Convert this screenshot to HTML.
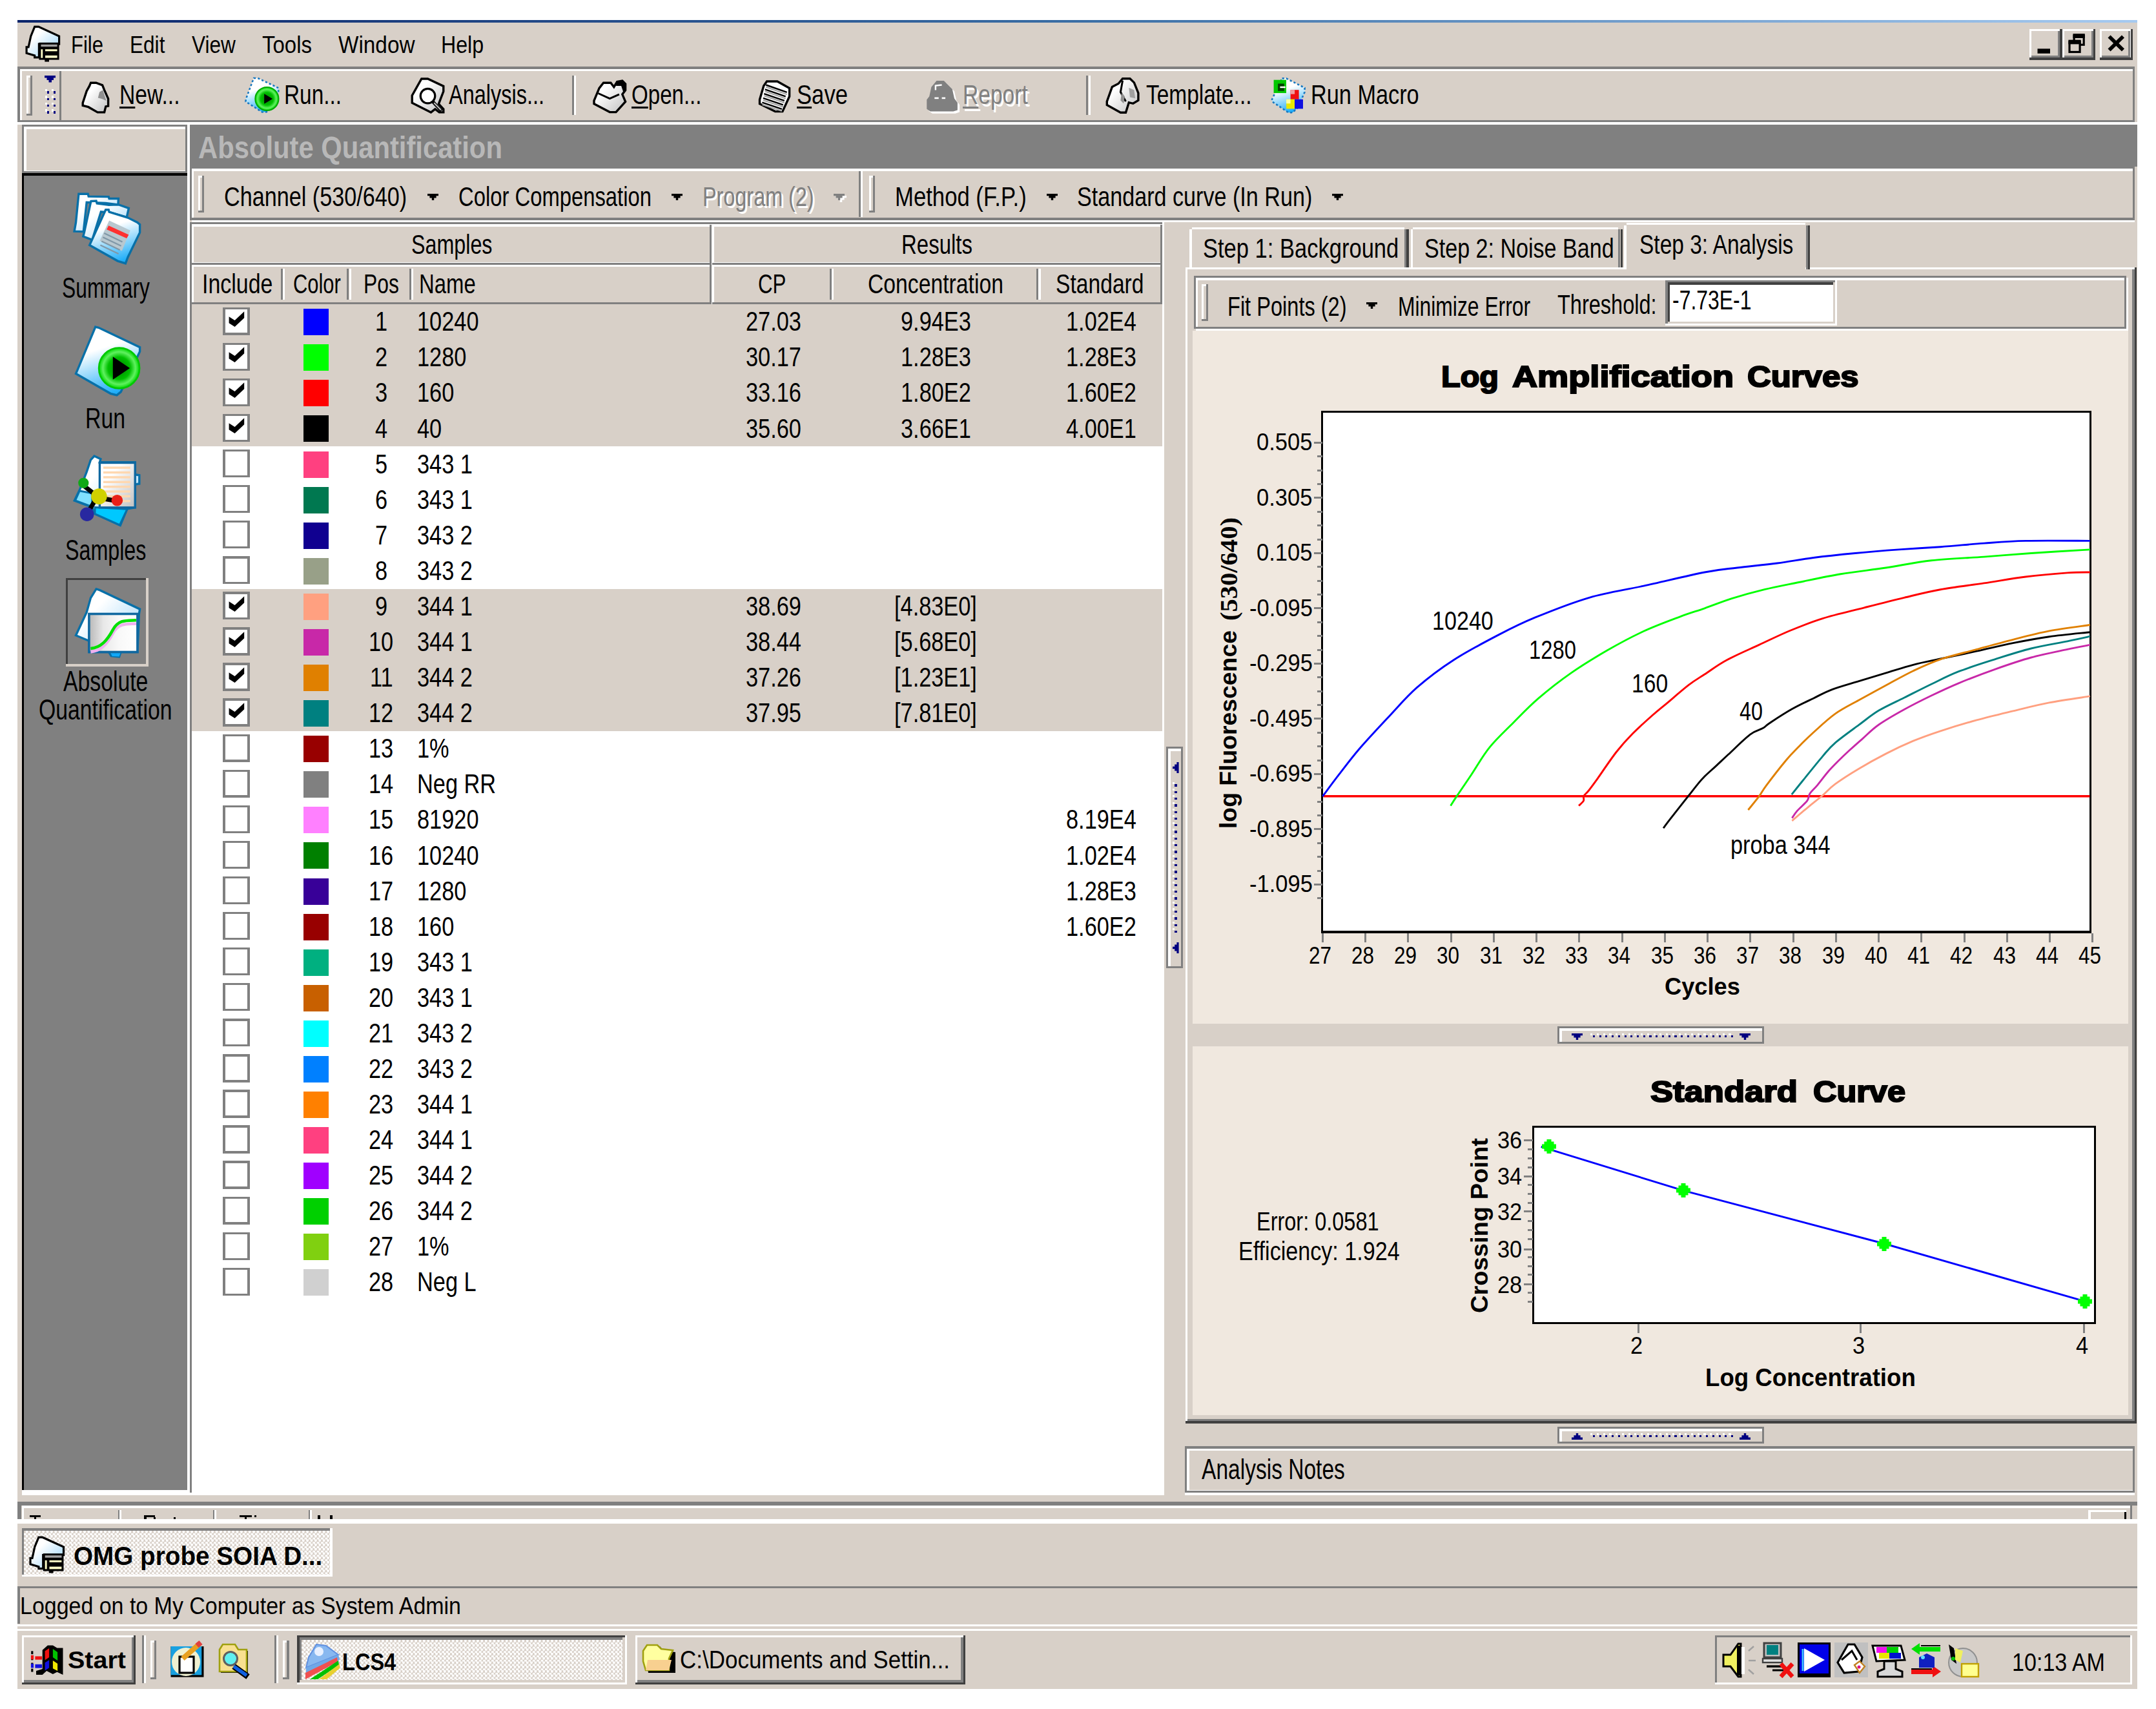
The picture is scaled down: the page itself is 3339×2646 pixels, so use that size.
<!DOCTYPE html>
<html><head><meta charset="utf-8"><title>LightCycler</title>
<style>
html,body{margin:0;padding:0;background:#fff;}
body{width:3339px;height:2646px;position:relative;overflow:hidden;font-family:"Liberation Sans",sans-serif;}
div,span.t,svg{position:absolute;}
span.t{white-space:pre;line-height:1;transform-origin:0 0;}
u{text-decoration:underline;text-decoration-thickness:3.2px;text-underline-offset:4px;text-decoration-skip-ink:none}
</style></head><body>
<div style="left:27.0px;top:31.0px;width:3282.7px;height:2583.6px;background:#D8D0C8;"></div>
<div style="left:27.0px;top:31.0px;width:3282.7px;height:3.6px;background:linear-gradient(90deg,#0A246A,#3a6ea5 50%,#A6CAF0);"></div>
<span class="t" style="left:109.8px;top:50.5px;font-size:37.68px;color:#000;transform:scaleX(0.8229);">File</span>
<span class="t" style="left:200.6px;top:50.5px;font-size:37.68px;color:#000;transform:scaleX(0.8381);">Edit</span>
<span class="t" style="left:296.6px;top:50.5px;font-size:37.68px;color:#000;transform:scaleX(0.8384);">View</span>
<span class="t" style="left:406.4px;top:50.5px;font-size:37.68px;color:#000;transform:scaleX(0.8751);">Tools</span>
<span class="t" style="left:524.4px;top:50.5px;font-size:37.68px;color:#000;transform:scaleX(0.8841);">Window</span>
<span class="t" style="left:683.4px;top:50.5px;font-size:37.68px;color:#000;transform:scaleX(0.8539);">Help</span>
<div style="left:3142.7px;top:44.8px;width:50.9px;height:47.9px;background:#404040;"></div>
<div style="left:3142.7px;top:44.8px;width:47.7px;height:44.7px;background:#FFFFFF;"></div>
<div style="left:3145.9px;top:48.0px;width:44.4px;height:41.4px;background:#808080;"></div>
<div style="left:3145.9px;top:48.0px;width:41.2px;height:38.2px;background:#D8D0C8;"></div>
<div style="left:3193.6px;top:44.8px;width:51.5px;height:47.9px;background:#404040;"></div>
<div style="left:3193.6px;top:44.8px;width:48.3px;height:44.7px;background:#FFFFFF;"></div>
<div style="left:3196.8px;top:48.0px;width:45.0px;height:41.4px;background:#808080;"></div>
<div style="left:3196.8px;top:48.0px;width:41.8px;height:38.2px;background:#D8D0C8;"></div>
<div style="left:3251.7px;top:44.8px;width:51.1px;height:47.9px;background:#404040;"></div>
<div style="left:3251.7px;top:44.8px;width:47.9px;height:44.7px;background:#FFFFFF;"></div>
<div style="left:3254.9px;top:48.0px;width:44.6px;height:41.4px;background:#808080;"></div>
<div style="left:3254.9px;top:48.0px;width:41.4px;height:38.2px;background:#D8D0C8;"></div>
<div style="left:27.0px;top:103.2px;width:3278.8px;height:85.7px;background:#808080;"></div>
<div style="left:30.6px;top:106.6px;width:3272.6px;height:79.4px;background:#FFFFFF;"></div>
<div style="left:34.0px;top:110.0px;width:3269.2px;height:76.0px;background:#D8D0C8;"></div>
<div style="left:27.0px;top:188.9px;width:3282.7px;height:4.1px;background:#FFFFFF;"></div>
<div style="left:91.9px;top:110.0px;width:3.1px;height:78.9px;background:#808080;"></div>
<div style="left:70.0px;top:185.9px;width:25.0px;height:3.0px;background:#808080;"></div>
<div style="left:40.5px;top:117.0px;width:9.5px;height:61.7px;background:#808080;"></div>
<div style="left:40.5px;top:117.0px;width:6.5px;height:58.5px;background:#FFFFFF;"></div>
<div style="left:43.5px;top:120.0px;width:3.5px;height:55.5px;background:#D8D0C8;"></div>
<svg style="left:69px;top:117px" width="18" height="11"><path d="M0 0H17V3.5H14V7H11V10.5H6.5V7H3.5V3.5H0Z" fill="#000080"/></svg>
<div style="left:69.5px;top:138.0px;width:3.4px;height:3.4px;background:#FFFFFF;"></div>
<div style="left:72.7px;top:141.2px;width:3.4px;height:3.4px;background:#000080;"></div>
<div style="left:79.5px;top:138.0px;width:3.4px;height:3.4px;background:#FFFFFF;"></div>
<div style="left:82.7px;top:141.2px;width:3.4px;height:3.4px;background:#000080;"></div>
<div style="left:69.5px;top:148.4px;width:3.4px;height:3.4px;background:#FFFFFF;"></div>
<div style="left:72.7px;top:151.6px;width:3.4px;height:3.4px;background:#000080;"></div>
<div style="left:79.5px;top:148.4px;width:3.4px;height:3.4px;background:#FFFFFF;"></div>
<div style="left:82.7px;top:151.6px;width:3.4px;height:3.4px;background:#000080;"></div>
<div style="left:69.5px;top:158.8px;width:3.4px;height:3.4px;background:#FFFFFF;"></div>
<div style="left:72.7px;top:162.0px;width:3.4px;height:3.4px;background:#000080;"></div>
<div style="left:79.5px;top:158.8px;width:3.4px;height:3.4px;background:#FFFFFF;"></div>
<div style="left:82.7px;top:162.0px;width:3.4px;height:3.4px;background:#000080;"></div>
<div style="left:69.5px;top:169.2px;width:3.4px;height:3.4px;background:#FFFFFF;"></div>
<div style="left:72.7px;top:172.4px;width:3.4px;height:3.4px;background:#000080;"></div>
<div style="left:79.5px;top:169.2px;width:3.4px;height:3.4px;background:#FFFFFF;"></div>
<div style="left:82.7px;top:172.4px;width:3.4px;height:3.4px;background:#000080;"></div>
<span class="t" style="left:184.8px;top:125.3px;font-size:43.19px;color:#000;transform:scaleX(0.7796);"><u>N</u>ew...</span>
<span class="t" style="left:440.0px;top:125.3px;font-size:43.19px;color:#000;transform:scaleX(0.7725);">Run...</span>
<span class="t" style="left:694.8px;top:125.3px;font-size:43.19px;color:#000;transform:scaleX(0.7519);">Analysis...</span>
<span class="t" style="left:977.5px;top:125.3px;font-size:43.19px;color:#000;transform:scaleX(0.7659);"><u>O</u>pen...</span>
<span class="t" style="left:1234.0px;top:125.3px;font-size:43.19px;color:#000;transform:scaleX(0.8023);"><u>S</u>ave</span>
<span class="t" style="left:1494.2px;top:128.5px;font-size:43.19px;color:#fff;transform:scaleX(0.7773);"><u>R</u>eport</span>
<span class="t" style="left:1491.0px;top:125.3px;font-size:43.19px;color:#808080;transform:scaleX(0.7773);"><u>R</u>eport</span>
<span class="t" style="left:1775.0px;top:125.3px;font-size:43.19px;color:#000;transform:scaleX(0.7738);">Template...</span>
<span class="t" style="left:2030.0px;top:125.3px;font-size:43.19px;color:#000;transform:scaleX(0.7936);">Run Macro</span>
<div style="left:886.0px;top:117.0px;width:3.2px;height:61.0px;background:#808080;"></div>
<div style="left:889.2px;top:117.0px;width:3.2px;height:61.0px;background:#FFFFFF;"></div>
<div style="left:1682.3px;top:117.0px;width:3.2px;height:61.0px;background:#808080;"></div>
<div style="left:1685.5px;top:117.0px;width:3.2px;height:61.0px;background:#FFFFFF;"></div>
<div style="left:34.2px;top:193.0px;width:256.2px;height:75.3px;background:#808080;"></div>
<div style="left:37.2px;top:196.0px;width:250.2px;height:68.5px;background:#FFFFFF;"></div>
<div style="left:41.0px;top:199.8px;width:246.4px;height:64.7px;background:#D8D0C8;"></div>
<div style="left:34.2px;top:268.3px;width:256.2px;height:3.7px;background:#000;"></div>
<div style="left:34.2px;top:272.0px;width:256.2px;height:2035.3px;background:#000;"></div>
<div style="left:37.4px;top:272.0px;width:253.0px;height:2035.3px;background:#808080;"></div>
<div style="left:290.4px;top:193.0px;width:3.8px;height:2118.0px;background:#FFFFFF;"></div>
<div style="left:34.2px;top:2307.3px;width:260.0px;height:7.3px;background:#FFFFFF;"></div>
<span class="t" style="left:95.5px;top:424.5px;font-size:43.48px;color:#000;transform:scaleX(0.7313);">Summary</span>
<span class="t" style="left:132.4px;top:626.7px;font-size:43.48px;color:#000;transform:scaleX(0.7796);">Run</span>
<span class="t" style="left:100.8px;top:830.7px;font-size:43.48px;color:#000;transform:scaleX(0.7414);">Samples</span>
<span class="t" style="left:97.8px;top:1034.2px;font-size:43.48px;color:#000;transform:scaleX(0.7764);">Absolute</span>
<span class="t" style="left:60.2px;top:1078.4px;font-size:43.48px;color:#000;transform:scaleX(0.7767);">Quantification</span>
<div style="left:101.5px;top:894.5px;width:128.0px;height:137.0px;background:#D8D0C8;"></div>
<div style="left:101.5px;top:894.5px;width:124.8px;height:133.8px;background:#404040;"></div>
<div style="left:104.7px;top:897.7px;width:121.5px;height:130.5px;background:#808080;"></div>
<div style="left:294.2px;top:193.0px;width:3015.5px;height:64.8px;background:#808080;"></div>
<div style="left:294.2px;top:257.8px;width:3011.6px;height:3.5px;background:#808080;"></div>
<span class="t" style="left:306.5px;top:203.5px;font-size:48.84px;color:#B8B8B8;transform:scaleX(0.8551);font-weight:bold;">Absolute Quantification</span>
<div style="left:296.9px;top:261.3px;width:3012.1px;height:82.7px;background:#FFFFFF;"></div>
<div style="left:293.7px;top:257.9px;width:3012.1px;height:82.7px;background:#808080;"></div>
<div style="left:296.9px;top:261.3px;width:3005.7px;height:75.9px;background:#FFFFFF;"></div>
<div style="left:300.1px;top:264.7px;width:3002.5px;height:72.5px;background:#D8D0C8;"></div>
<div style="left:3306.0px;top:257.9px;width:3.0px;height:86.1px;background:#D8D0C8;"></div>
<div style="left:306.5px;top:272.0px;width:9.5px;height:57.4px;background:#808080;"></div>
<div style="left:306.5px;top:272.0px;width:6.5px;height:54.4px;background:#FFFFFF;"></div>
<div style="left:309.5px;top:275.0px;width:3.5px;height:51.4px;background:#D8D0C8;"></div>
<span class="t" style="left:347.4px;top:284.2px;font-size:42.46px;color:#000;transform:scaleX(0.8050);">Channel (530/640)</span>
<svg style="left:662.0px;top:300.2px" width="18" height="11"><path d="M0 0H17V3.3H13.6V6.6H10.2V9.9H6.8V6.6H3.4V3.3H0Z" fill="#000"/></svg>
<span class="t" style="left:709.7px;top:284.2px;font-size:42.46px;color:#000;transform:scaleX(0.7725);">Color Compensation</span>
<svg style="left:1040.3px;top:300.2px" width="18" height="11"><path d="M0 0H17V3.3H13.6V6.6H10.2V9.9H6.8V6.6H3.4V3.3H0Z" fill="#000"/></svg>
<span class="t" style="left:1091.2px;top:287.4px;font-size:42.46px;color:#fff;transform:scaleX(0.7623);">Program (2)</span>
<span class="t" style="left:1088.0px;top:284.2px;font-size:42.46px;color:#808080;transform:scaleX(0.7623);">Program (2)</span>
<svg style="left:1294.2px;top:303.4px" width="18" height="11"><path d="M0 0H17V3.3H13.6V6.6H10.2V9.9H6.8V6.6H3.4V3.3H0Z" fill="#fff"/></svg>
<svg style="left:1291.0px;top:300.2px" width="18" height="11"><path d="M0 0H17V3.3H13.6V6.6H10.2V9.9H6.8V6.6H3.4V3.3H0Z" fill="#808080"/></svg>
<div style="left:1330.0px;top:265.4px;width:3.2px;height:70.8px;background:#808080;"></div>
<div style="left:1333.2px;top:265.4px;width:3.3px;height:70.8px;background:#FFFFFF;"></div>
<div style="left:1345.8px;top:272.0px;width:9.5px;height:57.4px;background:#808080;"></div>
<div style="left:1345.8px;top:272.0px;width:6.5px;height:54.4px;background:#FFFFFF;"></div>
<div style="left:1348.8px;top:275.0px;width:3.5px;height:51.4px;background:#D8D0C8;"></div>
<span class="t" style="left:1385.8px;top:284.2px;font-size:42.46px;color:#000;transform:scaleX(0.8173);">Method (F.P.)</span>
<svg style="left:1621.0px;top:300.2px" width="18" height="11"><path d="M0 0H17V3.3H13.6V6.6H10.2V9.9H6.8V6.6H3.4V3.3H0Z" fill="#000"/></svg>
<span class="t" style="left:1667.6px;top:284.2px;font-size:42.46px;color:#000;transform:scaleX(0.8041);">Standard curve (In Run)</span>
<svg style="left:2062.8px;top:300.2px" width="18" height="11"><path d="M0 0H17V3.3H13.6V6.6H10.2V9.9H6.8V6.6H3.4V3.3H0Z" fill="#000"/></svg>
<div style="left:294.0px;top:343.8px;width:1509.2px;height:1971.0px;background:#FFFFFF;"></div>
<div style="left:294.0px;top:343.8px;width:1506.0px;height:3.7px;background:#808080;"></div>
<div style="left:294.0px;top:343.8px;width:2.9px;height:1967.7px;background:#808080;"></div>
<div style="left:296.9px;top:347.5px;width:805.6px;height:62.2px;background:#808080;"></div>
<div style="left:296.9px;top:347.5px;width:802.4px;height:59.0px;background:#FFFFFF;"></div>
<div style="left:300.1px;top:350.7px;width:799.1px;height:55.7px;background:#D8D0C8;"></div>
<div style="left:1102.5px;top:347.5px;width:697.5px;height:62.2px;background:#808080;"></div>
<div style="left:1102.5px;top:347.5px;width:694.3px;height:59.0px;background:#FFFFFF;"></div>
<div style="left:1105.7px;top:350.7px;width:691.0px;height:55.7px;background:#D8D0C8;"></div>
<div style="left:296.9px;top:409.7px;width:805.6px;height:61.3px;background:#808080;"></div>
<div style="left:296.9px;top:409.7px;width:802.4px;height:58.1px;background:#FFFFFF;"></div>
<div style="left:300.1px;top:412.9px;width:799.1px;height:54.8px;background:#D8D0C8;"></div>
<div style="left:1102.5px;top:409.7px;width:697.5px;height:61.3px;background:#808080;"></div>
<div style="left:1102.5px;top:409.7px;width:694.3px;height:58.1px;background:#FFFFFF;"></div>
<div style="left:1105.7px;top:412.9px;width:691.0px;height:54.8px;background:#D8D0C8;"></div>
<span class="t" style="left:636.9px;top:356.6px;font-size:43.04px;color:#000;transform:scaleX(0.7495);">Samples</span>
<span class="t" style="left:1395.5px;top:356.6px;font-size:43.04px;color:#000;transform:scaleX(0.7663);">Results</span>
<span class="t" style="left:312.6px;top:417.9px;font-size:43.04px;color:#000;transform:scaleX(0.7881);">Include</span>
<span class="t" style="left:453.5px;top:417.9px;font-size:43.04px;color:#000;transform:scaleX(0.7164);">Color</span>
<span class="t" style="left:562.7px;top:417.9px;font-size:43.04px;color:#000;transform:scaleX(0.7391);">Pos</span>
<span class="t" style="left:648.5px;top:417.9px;font-size:43.04px;color:#000;transform:scaleX(0.7638);">Name</span>
<span class="t" style="left:1173.9px;top:417.9px;font-size:43.04px;color:#000;transform:scaleX(0.7254);">CP</span>
<span class="t" style="left:1343.7px;top:417.9px;font-size:43.04px;color:#000;transform:scaleX(0.7834);">Concentration</span>
<span class="t" style="left:1635.1px;top:417.9px;font-size:43.04px;color:#000;transform:scaleX(0.7816);">Standard</span>
<div style="left:435.0px;top:416.4px;width:3.2px;height:47.9px;background:#808080;"></div>
<div style="left:438.2px;top:416.4px;width:3.2px;height:47.9px;background:#FFFFFF;"></div>
<div style="left:537.3px;top:416.4px;width:3.2px;height:47.9px;background:#808080;"></div>
<div style="left:540.5px;top:416.4px;width:3.2px;height:47.9px;background:#FFFFFF;"></div>
<div style="left:634.0px;top:416.4px;width:3.2px;height:47.9px;background:#808080;"></div>
<div style="left:637.2px;top:416.4px;width:3.2px;height:47.9px;background:#FFFFFF;"></div>
<div style="left:1284.7px;top:416.4px;width:3.2px;height:47.9px;background:#808080;"></div>
<div style="left:1287.9px;top:416.4px;width:3.2px;height:47.9px;background:#FFFFFF;"></div>
<div style="left:1605.2px;top:416.4px;width:3.2px;height:47.9px;background:#808080;"></div>
<div style="left:1608.4px;top:416.4px;width:3.2px;height:47.9px;background:#FFFFFF;"></div>
<div style="left:296.9px;top:471.0px;width:1503.1px;height:55.1px;background:#D8D0C8;"></div>
<div style="left:345.2px;top:475.5px;width:41.6px;height:43.4px;background:#808080;"></div>
<div style="left:348.6px;top:478.9px;width:34.8px;height:36.6px;background:#FFFFFF;"></div>
<svg style="left:348.6px;top:478.9px" width="35" height="37" viewBox="0 0 35 37"><path d="M5.6 11.2 L14.6 16.9 L29.2 3.3 L29.2 13.3 L14.6 26.9 L5.6 21.2Z" fill="#000"/></svg>
<div style="left:469.9px;top:478.2px;width:38.9px;height:41.1px;background:#0000FF;"></div>
<span class="t" style="left:580.8px;top:476.3px;font-size:43.19px;color:#000;transform:scaleX(0.7950);">1</span>
<span class="t" style="left:646.3px;top:476.3px;font-size:43.19px;color:#000;transform:scaleX(0.7950);">10240</span>
<span class="t" style="left:1154.5px;top:476.3px;font-size:43.19px;color:#000;transform:scaleX(0.7950);">27.03</span>
<span class="t" style="left:1394.6px;top:476.3px;font-size:43.19px;color:#000;transform:scaleX(0.7950);">9.94E3</span>
<span class="t" style="left:1650.6px;top:476.3px;font-size:43.19px;color:#000;transform:scaleX(0.7950);">1.02E4</span>
<div style="left:296.9px;top:526.1px;width:1503.1px;height:55.1px;background:#D8D0C8;"></div>
<div style="left:345.2px;top:530.6px;width:41.6px;height:43.4px;background:#808080;"></div>
<div style="left:348.6px;top:534.0px;width:34.8px;height:36.6px;background:#FFFFFF;"></div>
<svg style="left:348.6px;top:534.0px" width="35" height="37" viewBox="0 0 35 37"><path d="M5.6 11.2 L14.6 16.9 L29.2 3.3 L29.2 13.3 L14.6 26.9 L5.6 21.2Z" fill="#000"/></svg>
<div style="left:469.9px;top:533.3px;width:38.9px;height:41.1px;background:#00FF00;"></div>
<span class="t" style="left:580.8px;top:531.4px;font-size:43.19px;color:#000;transform:scaleX(0.7950);">2</span>
<span class="t" style="left:646.3px;top:531.4px;font-size:43.19px;color:#000;transform:scaleX(0.7950);">1280</span>
<span class="t" style="left:1154.5px;top:531.4px;font-size:43.19px;color:#000;transform:scaleX(0.7950);">30.17</span>
<span class="t" style="left:1394.6px;top:531.4px;font-size:43.19px;color:#000;transform:scaleX(0.7950);">1.28E3</span>
<span class="t" style="left:1650.6px;top:531.4px;font-size:43.19px;color:#000;transform:scaleX(0.7950);">1.28E3</span>
<div style="left:296.9px;top:581.2px;width:1503.1px;height:55.1px;background:#D8D0C8;"></div>
<div style="left:345.2px;top:585.7px;width:41.6px;height:43.4px;background:#808080;"></div>
<div style="left:348.6px;top:589.1px;width:34.8px;height:36.6px;background:#FFFFFF;"></div>
<svg style="left:348.6px;top:589.1px" width="35" height="37" viewBox="0 0 35 37"><path d="M5.6 11.2 L14.6 16.9 L29.2 3.3 L29.2 13.3 L14.6 26.9 L5.6 21.2Z" fill="#000"/></svg>
<div style="left:469.9px;top:588.4px;width:38.9px;height:41.1px;background:#FF0000;"></div>
<span class="t" style="left:580.8px;top:586.4px;font-size:43.19px;color:#000;transform:scaleX(0.7950);">3</span>
<span class="t" style="left:646.3px;top:586.4px;font-size:43.19px;color:#000;transform:scaleX(0.7950);">160</span>
<span class="t" style="left:1154.5px;top:586.4px;font-size:43.19px;color:#000;transform:scaleX(0.7950);">33.16</span>
<span class="t" style="left:1394.6px;top:586.4px;font-size:43.19px;color:#000;transform:scaleX(0.7950);">1.80E2</span>
<span class="t" style="left:1650.6px;top:586.4px;font-size:43.19px;color:#000;transform:scaleX(0.7950);">1.60E2</span>
<div style="left:296.9px;top:636.2px;width:1503.1px;height:55.1px;background:#D8D0C8;"></div>
<div style="left:345.2px;top:640.7px;width:41.6px;height:43.4px;background:#808080;"></div>
<div style="left:348.6px;top:644.1px;width:34.8px;height:36.6px;background:#FFFFFF;"></div>
<svg style="left:348.6px;top:644.1px" width="35" height="37" viewBox="0 0 35 37"><path d="M5.6 11.2 L14.6 16.9 L29.2 3.3 L29.2 13.3 L14.6 26.9 L5.6 21.2Z" fill="#000"/></svg>
<div style="left:469.9px;top:643.4px;width:38.9px;height:41.1px;background:#000000;"></div>
<span class="t" style="left:580.8px;top:641.5px;font-size:43.19px;color:#000;transform:scaleX(0.7950);">4</span>
<span class="t" style="left:646.3px;top:641.5px;font-size:43.19px;color:#000;transform:scaleX(0.7950);">40</span>
<span class="t" style="left:1154.5px;top:641.5px;font-size:43.19px;color:#000;transform:scaleX(0.7950);">35.60</span>
<span class="t" style="left:1394.6px;top:641.5px;font-size:43.19px;color:#000;transform:scaleX(0.7950);">3.66E1</span>
<span class="t" style="left:1650.6px;top:641.5px;font-size:43.19px;color:#000;transform:scaleX(0.7950);">4.00E1</span>
<div style="left:345.2px;top:695.8px;width:41.6px;height:43.4px;background:#808080;"></div>
<div style="left:348.6px;top:699.2px;width:34.8px;height:36.6px;background:#FFFFFF;"></div>
<div style="left:469.9px;top:698.5px;width:38.9px;height:41.1px;background:#FF4080;"></div>
<span class="t" style="left:580.8px;top:696.6px;font-size:43.19px;color:#000;transform:scaleX(0.7950);">5</span>
<span class="t" style="left:646.3px;top:696.6px;font-size:43.19px;color:#000;transform:scaleX(0.7950);">343 1</span>
<div style="left:345.2px;top:750.9px;width:41.6px;height:43.4px;background:#808080;"></div>
<div style="left:348.6px;top:754.3px;width:34.8px;height:36.6px;background:#FFFFFF;"></div>
<div style="left:469.9px;top:753.6px;width:38.9px;height:41.1px;background:#007850;"></div>
<span class="t" style="left:580.8px;top:751.7px;font-size:43.19px;color:#000;transform:scaleX(0.7950);">6</span>
<span class="t" style="left:646.3px;top:751.7px;font-size:43.19px;color:#000;transform:scaleX(0.7950);">343 1</span>
<div style="left:345.2px;top:806.0px;width:41.6px;height:43.4px;background:#808080;"></div>
<div style="left:348.6px;top:809.4px;width:34.8px;height:36.6px;background:#FFFFFF;"></div>
<div style="left:469.9px;top:808.7px;width:38.9px;height:41.1px;background:#100090;"></div>
<span class="t" style="left:580.8px;top:806.8px;font-size:43.19px;color:#000;transform:scaleX(0.7950);">7</span>
<span class="t" style="left:646.3px;top:806.8px;font-size:43.19px;color:#000;transform:scaleX(0.7950);">343 2</span>
<div style="left:345.2px;top:861.1px;width:41.6px;height:43.4px;background:#808080;"></div>
<div style="left:348.6px;top:864.5px;width:34.8px;height:36.6px;background:#FFFFFF;"></div>
<div style="left:469.9px;top:863.8px;width:38.9px;height:41.1px;background:#98A088;"></div>
<span class="t" style="left:580.8px;top:861.8px;font-size:43.19px;color:#000;transform:scaleX(0.7950);">8</span>
<span class="t" style="left:646.3px;top:861.8px;font-size:43.19px;color:#000;transform:scaleX(0.7950);">343 2</span>
<div style="left:296.9px;top:911.6px;width:1503.1px;height:55.1px;background:#D8D0C8;"></div>
<div style="left:345.2px;top:916.1px;width:41.6px;height:43.4px;background:#808080;"></div>
<div style="left:348.6px;top:919.5px;width:34.8px;height:36.6px;background:#FFFFFF;"></div>
<svg style="left:348.6px;top:919.5px" width="35" height="37" viewBox="0 0 35 37"><path d="M5.6 11.2 L14.6 16.9 L29.2 3.3 L29.2 13.3 L14.6 26.9 L5.6 21.2Z" fill="#000"/></svg>
<div style="left:469.9px;top:918.8px;width:38.9px;height:41.1px;background:#FFA080;"></div>
<span class="t" style="left:580.8px;top:916.9px;font-size:43.19px;color:#000;transform:scaleX(0.7950);">9</span>
<span class="t" style="left:646.3px;top:916.9px;font-size:43.19px;color:#000;transform:scaleX(0.7950);">344 1</span>
<span class="t" style="left:1154.5px;top:916.9px;font-size:43.19px;color:#000;transform:scaleX(0.7950);">38.69</span>
<span class="t" style="left:1385.1px;top:916.9px;font-size:43.19px;color:#000;transform:scaleX(0.7950);">[4.83E0]</span>
<div style="left:296.9px;top:966.7px;width:1503.1px;height:55.1px;background:#D8D0C8;"></div>
<div style="left:345.2px;top:971.2px;width:41.6px;height:43.4px;background:#808080;"></div>
<div style="left:348.6px;top:974.6px;width:34.8px;height:36.6px;background:#FFFFFF;"></div>
<svg style="left:348.6px;top:974.6px" width="35" height="37" viewBox="0 0 35 37"><path d="M5.6 11.2 L14.6 16.9 L29.2 3.3 L29.2 13.3 L14.6 26.9 L5.6 21.2Z" fill="#000"/></svg>
<div style="left:469.9px;top:973.9px;width:38.9px;height:41.1px;background:#C828A8;"></div>
<span class="t" style="left:571.2px;top:972.0px;font-size:43.19px;color:#000;transform:scaleX(0.7950);">10</span>
<span class="t" style="left:646.3px;top:972.0px;font-size:43.19px;color:#000;transform:scaleX(0.7950);">344 1</span>
<span class="t" style="left:1154.5px;top:972.0px;font-size:43.19px;color:#000;transform:scaleX(0.7950);">38.44</span>
<span class="t" style="left:1385.1px;top:972.0px;font-size:43.19px;color:#000;transform:scaleX(0.7950);">[5.68E0]</span>
<div style="left:296.9px;top:1021.8px;width:1503.1px;height:55.1px;background:#D8D0C8;"></div>
<div style="left:345.2px;top:1026.3px;width:41.6px;height:43.4px;background:#808080;"></div>
<div style="left:348.6px;top:1029.7px;width:34.8px;height:36.6px;background:#FFFFFF;"></div>
<svg style="left:348.6px;top:1029.7px" width="35" height="37" viewBox="0 0 35 37"><path d="M5.6 11.2 L14.6 16.9 L29.2 3.3 L29.2 13.3 L14.6 26.9 L5.6 21.2Z" fill="#000"/></svg>
<div style="left:469.9px;top:1029.0px;width:38.9px;height:41.1px;background:#E08000;"></div>
<span class="t" style="left:572.5px;top:1027.1px;font-size:43.19px;color:#000;transform:scaleX(0.7950);">11</span>
<span class="t" style="left:646.3px;top:1027.1px;font-size:43.19px;color:#000;transform:scaleX(0.7950);">344 2</span>
<span class="t" style="left:1154.5px;top:1027.1px;font-size:43.19px;color:#000;transform:scaleX(0.7950);">37.26</span>
<span class="t" style="left:1385.1px;top:1027.1px;font-size:43.19px;color:#000;transform:scaleX(0.7950);">[1.23E1]</span>
<div style="left:296.9px;top:1076.9px;width:1503.1px;height:55.1px;background:#D8D0C8;"></div>
<div style="left:345.2px;top:1081.4px;width:41.6px;height:43.4px;background:#808080;"></div>
<div style="left:348.6px;top:1084.8px;width:34.8px;height:36.6px;background:#FFFFFF;"></div>
<svg style="left:348.6px;top:1084.8px" width="35" height="37" viewBox="0 0 35 37"><path d="M5.6 11.2 L14.6 16.9 L29.2 3.3 L29.2 13.3 L14.6 26.9 L5.6 21.2Z" fill="#000"/></svg>
<div style="left:469.9px;top:1084.1px;width:38.9px;height:41.1px;background:#008080;"></div>
<span class="t" style="left:571.2px;top:1082.2px;font-size:43.19px;color:#000;transform:scaleX(0.7950);">12</span>
<span class="t" style="left:646.3px;top:1082.2px;font-size:43.19px;color:#000;transform:scaleX(0.7950);">344 2</span>
<span class="t" style="left:1154.5px;top:1082.2px;font-size:43.19px;color:#000;transform:scaleX(0.7950);">37.95</span>
<span class="t" style="left:1385.1px;top:1082.2px;font-size:43.19px;color:#000;transform:scaleX(0.7950);">[7.81E0]</span>
<div style="left:345.2px;top:1136.5px;width:41.6px;height:43.4px;background:#808080;"></div>
<div style="left:348.6px;top:1139.9px;width:34.8px;height:36.6px;background:#FFFFFF;"></div>
<div style="left:469.9px;top:1139.2px;width:38.9px;height:41.1px;background:#980000;"></div>
<span class="t" style="left:571.2px;top:1137.2px;font-size:43.19px;color:#000;transform:scaleX(0.7950);">13</span>
<span class="t" style="left:646.3px;top:1137.2px;font-size:43.19px;color:#000;transform:scaleX(0.7950);">1%</span>
<div style="left:345.2px;top:1191.5px;width:41.6px;height:43.4px;background:#808080;"></div>
<div style="left:348.6px;top:1194.9px;width:34.8px;height:36.6px;background:#FFFFFF;"></div>
<div style="left:469.9px;top:1194.2px;width:38.9px;height:41.1px;background:#808080;"></div>
<span class="t" style="left:571.2px;top:1192.3px;font-size:43.19px;color:#000;transform:scaleX(0.7950);">14</span>
<span class="t" style="left:646.3px;top:1192.3px;font-size:43.19px;color:#000;transform:scaleX(0.7950);">Neg RR</span>
<div style="left:345.2px;top:1246.6px;width:41.6px;height:43.4px;background:#808080;"></div>
<div style="left:348.6px;top:1250.0px;width:34.8px;height:36.6px;background:#FFFFFF;"></div>
<div style="left:469.9px;top:1249.3px;width:38.9px;height:41.1px;background:#FF80FF;"></div>
<span class="t" style="left:571.2px;top:1247.4px;font-size:43.19px;color:#000;transform:scaleX(0.7950);">15</span>
<span class="t" style="left:646.3px;top:1247.4px;font-size:43.19px;color:#000;transform:scaleX(0.7950);">81920</span>
<span class="t" style="left:1650.6px;top:1247.4px;font-size:43.19px;color:#000;transform:scaleX(0.7950);">8.19E4</span>
<div style="left:345.2px;top:1301.7px;width:41.6px;height:43.4px;background:#808080;"></div>
<div style="left:348.6px;top:1305.1px;width:34.8px;height:36.6px;background:#FFFFFF;"></div>
<div style="left:469.9px;top:1304.4px;width:38.9px;height:41.1px;background:#008000;"></div>
<span class="t" style="left:571.2px;top:1302.5px;font-size:43.19px;color:#000;transform:scaleX(0.7950);">16</span>
<span class="t" style="left:646.3px;top:1302.5px;font-size:43.19px;color:#000;transform:scaleX(0.7950);">10240</span>
<span class="t" style="left:1650.6px;top:1302.5px;font-size:43.19px;color:#000;transform:scaleX(0.7950);">1.02E4</span>
<div style="left:345.2px;top:1356.8px;width:41.6px;height:43.4px;background:#808080;"></div>
<div style="left:348.6px;top:1360.2px;width:34.8px;height:36.6px;background:#FFFFFF;"></div>
<div style="left:469.9px;top:1359.5px;width:38.9px;height:41.1px;background:#380098;"></div>
<span class="t" style="left:571.2px;top:1357.6px;font-size:43.19px;color:#000;transform:scaleX(0.7950);">17</span>
<span class="t" style="left:646.3px;top:1357.6px;font-size:43.19px;color:#000;transform:scaleX(0.7950);">1280</span>
<span class="t" style="left:1650.6px;top:1357.6px;font-size:43.19px;color:#000;transform:scaleX(0.7950);">1.28E3</span>
<div style="left:345.2px;top:1411.9px;width:41.6px;height:43.4px;background:#808080;"></div>
<div style="left:348.6px;top:1415.3px;width:34.8px;height:36.6px;background:#FFFFFF;"></div>
<div style="left:469.9px;top:1414.6px;width:38.9px;height:41.1px;background:#980000;"></div>
<span class="t" style="left:571.2px;top:1412.6px;font-size:43.19px;color:#000;transform:scaleX(0.7950);">18</span>
<span class="t" style="left:646.3px;top:1412.6px;font-size:43.19px;color:#000;transform:scaleX(0.7950);">160</span>
<span class="t" style="left:1650.6px;top:1412.6px;font-size:43.19px;color:#000;transform:scaleX(0.7950);">1.60E2</span>
<div style="left:345.2px;top:1466.9px;width:41.6px;height:43.4px;background:#808080;"></div>
<div style="left:348.6px;top:1470.3px;width:34.8px;height:36.6px;background:#FFFFFF;"></div>
<div style="left:469.9px;top:1469.6px;width:38.9px;height:41.1px;background:#00B080;"></div>
<span class="t" style="left:571.2px;top:1467.7px;font-size:43.19px;color:#000;transform:scaleX(0.7950);">19</span>
<span class="t" style="left:646.3px;top:1467.7px;font-size:43.19px;color:#000;transform:scaleX(0.7950);">343 1</span>
<div style="left:345.2px;top:1522.0px;width:41.6px;height:43.4px;background:#808080;"></div>
<div style="left:348.6px;top:1525.4px;width:34.8px;height:36.6px;background:#FFFFFF;"></div>
<div style="left:469.9px;top:1524.7px;width:38.9px;height:41.1px;background:#C86000;"></div>
<span class="t" style="left:571.2px;top:1522.8px;font-size:43.19px;color:#000;transform:scaleX(0.7950);">20</span>
<span class="t" style="left:646.3px;top:1522.8px;font-size:43.19px;color:#000;transform:scaleX(0.7950);">343 1</span>
<div style="left:345.2px;top:1577.1px;width:41.6px;height:43.4px;background:#808080;"></div>
<div style="left:348.6px;top:1580.5px;width:34.8px;height:36.6px;background:#FFFFFF;"></div>
<div style="left:469.9px;top:1579.8px;width:38.9px;height:41.1px;background:#00FFFF;"></div>
<span class="t" style="left:571.2px;top:1577.9px;font-size:43.19px;color:#000;transform:scaleX(0.7950);">21</span>
<span class="t" style="left:646.3px;top:1577.9px;font-size:43.19px;color:#000;transform:scaleX(0.7950);">343 2</span>
<div style="left:345.2px;top:1632.2px;width:41.6px;height:43.4px;background:#808080;"></div>
<div style="left:348.6px;top:1635.6px;width:34.8px;height:36.6px;background:#FFFFFF;"></div>
<div style="left:469.9px;top:1634.9px;width:38.9px;height:41.1px;background:#0080FF;"></div>
<span class="t" style="left:571.2px;top:1633.0px;font-size:43.19px;color:#000;transform:scaleX(0.7950);">22</span>
<span class="t" style="left:646.3px;top:1633.0px;font-size:43.19px;color:#000;transform:scaleX(0.7950);">343 2</span>
<div style="left:345.2px;top:1687.3px;width:41.6px;height:43.4px;background:#808080;"></div>
<div style="left:348.6px;top:1690.7px;width:34.8px;height:36.6px;background:#FFFFFF;"></div>
<div style="left:469.9px;top:1690.0px;width:38.9px;height:41.1px;background:#FF8000;"></div>
<span class="t" style="left:571.2px;top:1688.0px;font-size:43.19px;color:#000;transform:scaleX(0.7950);">23</span>
<span class="t" style="left:646.3px;top:1688.0px;font-size:43.19px;color:#000;transform:scaleX(0.7950);">344 1</span>
<div style="left:345.2px;top:1742.3px;width:41.6px;height:43.4px;background:#808080;"></div>
<div style="left:348.6px;top:1745.7px;width:34.8px;height:36.6px;background:#FFFFFF;"></div>
<div style="left:469.9px;top:1745.0px;width:38.9px;height:41.1px;background:#FF4080;"></div>
<span class="t" style="left:571.2px;top:1743.1px;font-size:43.19px;color:#000;transform:scaleX(0.7950);">24</span>
<span class="t" style="left:646.3px;top:1743.1px;font-size:43.19px;color:#000;transform:scaleX(0.7950);">344 1</span>
<div style="left:345.2px;top:1797.4px;width:41.6px;height:43.4px;background:#808080;"></div>
<div style="left:348.6px;top:1800.8px;width:34.8px;height:36.6px;background:#FFFFFF;"></div>
<div style="left:469.9px;top:1800.1px;width:38.9px;height:41.1px;background:#A000FF;"></div>
<span class="t" style="left:571.2px;top:1798.2px;font-size:43.19px;color:#000;transform:scaleX(0.7950);">25</span>
<span class="t" style="left:646.3px;top:1798.2px;font-size:43.19px;color:#000;transform:scaleX(0.7950);">344 2</span>
<div style="left:345.2px;top:1852.5px;width:41.6px;height:43.4px;background:#808080;"></div>
<div style="left:348.6px;top:1855.9px;width:34.8px;height:36.6px;background:#FFFFFF;"></div>
<div style="left:469.9px;top:1855.2px;width:38.9px;height:41.1px;background:#00D000;"></div>
<span class="t" style="left:571.2px;top:1853.3px;font-size:43.19px;color:#000;transform:scaleX(0.7950);">26</span>
<span class="t" style="left:646.3px;top:1853.3px;font-size:43.19px;color:#000;transform:scaleX(0.7950);">344 2</span>
<div style="left:345.2px;top:1907.6px;width:41.6px;height:43.4px;background:#808080;"></div>
<div style="left:348.6px;top:1911.0px;width:34.8px;height:36.6px;background:#FFFFFF;"></div>
<div style="left:469.9px;top:1910.3px;width:38.9px;height:41.1px;background:#80D010;"></div>
<span class="t" style="left:571.2px;top:1908.4px;font-size:43.19px;color:#000;transform:scaleX(0.7950);">27</span>
<span class="t" style="left:646.3px;top:1908.4px;font-size:43.19px;color:#000;transform:scaleX(0.7950);">1%</span>
<div style="left:345.2px;top:1962.7px;width:41.6px;height:43.4px;background:#808080;"></div>
<div style="left:348.6px;top:1966.1px;width:34.8px;height:36.6px;background:#FFFFFF;"></div>
<div style="left:469.9px;top:1965.4px;width:38.9px;height:41.1px;background:#D0D0D0;"></div>
<span class="t" style="left:571.2px;top:1963.4px;font-size:43.19px;color:#000;transform:scaleX(0.7950);">28</span>
<span class="t" style="left:646.3px;top:1963.4px;font-size:43.19px;color:#000;transform:scaleX(0.7950);">Neg L</span>
<div style="left:1806.1px;top:1155.6px;width:25.6px;height:343.3px;background:#808080;"></div>
<div style="left:1809.1px;top:1158.8px;width:19.6px;height:336.9px;background:#FFFFFF;"></div>
<div style="left:1813.0px;top:1163.0px;width:15.7px;height:332.7px;background:#D8D0C8;"></div>
<div style="left:1836.0px;top:413.6px;width:1473.0px;height:1790.0px;background:#404040;"></div>
<div style="left:1836.0px;top:413.6px;width:1469.8px;height:1786.8px;background:#FFFFFF;"></div>
<div style="left:1839.2px;top:416.8px;width:1466.5px;height:1783.5px;background:#808080;"></div>
<div style="left:1839.2px;top:416.8px;width:1463.3px;height:1780.3px;background:#D8D0C8;"></div>
<div style="left:1842.4px;top:355.0px;width:3.2px;height:58.6px;background:#FFFFFF;"></div>
<div style="left:1845.6px;top:351.8px;width:329.5px;height:3.2px;background:#FFFFFF;"></div>
<div style="left:2178.4px;top:355.0px;width:3.2px;height:58.6px;background:#404040;"></div>
<div style="left:2175.1px;top:355.0px;width:3.2px;height:58.6px;background:#808080;"></div>
<div style="left:1845.6px;top:355.0px;width:329.5px;height:58.6px;background:#D8D0C8;"></div>
<div style="left:2184.8px;top:355.0px;width:3.2px;height:58.6px;background:#FFFFFF;"></div>
<div style="left:2188.0px;top:351.8px;width:318.2px;height:3.2px;background:#FFFFFF;"></div>
<div style="left:2509.5px;top:355.0px;width:3.2px;height:58.6px;background:#404040;"></div>
<div style="left:2506.2px;top:355.0px;width:3.2px;height:58.6px;background:#808080;"></div>
<div style="left:2188.0px;top:355.0px;width:318.2px;height:58.6px;background:#D8D0C8;"></div>
<div style="left:2515.4px;top:348.5px;width:3.2px;height:68.5px;background:#FFFFFF;"></div>
<div style="left:2518.6px;top:345.3px;width:277.9px;height:3.2px;background:#FFFFFF;"></div>
<div style="left:2799.8px;top:348.5px;width:3.2px;height:68.5px;background:#404040;"></div>
<div style="left:2796.5px;top:348.5px;width:3.2px;height:68.5px;background:#808080;"></div>
<div style="left:2518.6px;top:348.5px;width:277.9px;height:68.5px;background:#D8D0C8;"></div>
<span class="t" style="left:1862.6px;top:364.3px;font-size:42.03px;color:#000;transform:scaleX(0.8217);">Step 1: Background</span>
<span class="t" style="left:2206.3px;top:364.3px;font-size:42.03px;color:#000;transform:scaleX(0.8109);">Step 2: Noise Band</span>
<span class="t" style="left:2539.0px;top:357.7px;font-size:42.03px;color:#000;transform:scaleX(0.7972);">Step 3: Analysis</span>
<div style="left:1851.9px;top:430.1px;width:1444.3px;height:82.3px;background:#FFFFFF;"></div>
<div style="left:1848.7px;top:426.7px;width:1444.3px;height:82.3px;background:#808080;"></div>
<div style="left:1851.9px;top:430.1px;width:1437.9px;height:75.5px;background:#FFFFFF;"></div>
<div style="left:1855.1px;top:433.5px;width:1434.7px;height:72.1px;background:#D8D0C8;"></div>
<div style="left:1861.0px;top:440.0px;width:9.5px;height:57.0px;background:#808080;"></div>
<div style="left:1861.0px;top:440.0px;width:6.5px;height:54.0px;background:#FFFFFF;"></div>
<div style="left:1864.0px;top:443.0px;width:3.5px;height:51.0px;background:#D8D0C8;"></div>
<span class="t" style="left:1901.4px;top:453.6px;font-size:42.03px;color:#000;transform:scaleX(0.7750);">Fit Points (2)</span>
<svg style="left:2116.3px;top:468.0px" width="18" height="11"><path d="M0 0H17V3.3H13.6V6.6H10.2V9.9H6.8V6.6H3.4V3.3H0Z" fill="#000"/></svg>
<span class="t" style="left:2164.8px;top:453.6px;font-size:42.03px;color:#000;transform:scaleX(0.7575);">Minimize Error</span>
<span class="t" style="left:2412.4px;top:450.6px;font-size:42.03px;color:#000;transform:scaleX(0.7735);">Threshold:</span>
<div style="left:2579.3px;top:434.2px;width:266.2px;height:70.3px;background:#FFFFFF;"></div>
<div style="left:2579.3px;top:434.2px;width:263.0px;height:67.1px;background:#808080;"></div>
<div style="left:2582.5px;top:437.4px;width:259.7px;height:63.8px;background:#D8D0C8;"></div>
<div style="left:2582.5px;top:437.4px;width:256.5px;height:60.6px;background:#404040;"></div>
<div style="left:2585.8px;top:440.7px;width:253.2px;height:57.3px;background:#FFFFFF;"></div>
<span class="t" style="left:2589.9px;top:444.1px;font-size:42.03px;color:#000;transform:scaleX(0.7600);">-7.73E-1</span>
<div style="left:1847.4px;top:511.5px;width:1448.6px;height:1073.1px;background:#F0E8DF;"></div>
<div style="left:1847.4px;top:1620.4px;width:1448.6px;height:570.6px;background:#F0E8DF;"></div>
<div style="left:2412.2px;top:1589.3px;width:320.3px;height:26.6px;background:#808080;"></div>
<div style="left:2415.2px;top:1592.3px;width:314.3px;height:20.6px;background:#FFFFFF;"></div>
<div style="left:2419.2px;top:1596.3px;width:310.3px;height:16.6px;background:#D8D0C8;"></div>
<svg style="left:2434.2px;top:1599.5px" width="18" height="11"><path d="M0 0H17V3.3H13.6V6.6H10.2V9.9H6.8V6.6H3.4V3.3H0Z" fill="#000080"/></svg>
<svg style="left:2694.0px;top:1599.5px" width="18" height="11"><path d="M0 0H17V3.3H13.6V6.6H10.2V9.9H6.8V6.6H3.4V3.3H0Z" fill="#000080"/></svg>
<div style="left:2463.2px;top:1599.5px;width:3.2px;height:3.2px;background:#FFFFFF;"></div>
<div style="left:2466.8px;top:1603.1px;width:3.2px;height:3.0px;background:#000080;"></div>
<div style="left:2472.9px;top:1599.5px;width:3.2px;height:3.2px;background:#FFFFFF;"></div>
<div style="left:2476.5px;top:1603.1px;width:3.2px;height:3.0px;background:#000080;"></div>
<div style="left:2482.7px;top:1599.5px;width:3.2px;height:3.2px;background:#FFFFFF;"></div>
<div style="left:2486.3px;top:1603.1px;width:3.2px;height:3.0px;background:#000080;"></div>
<div style="left:2492.4px;top:1599.5px;width:3.2px;height:3.2px;background:#FFFFFF;"></div>
<div style="left:2496.0px;top:1603.1px;width:3.2px;height:3.0px;background:#000080;"></div>
<div style="left:2502.1px;top:1599.5px;width:3.2px;height:3.2px;background:#FFFFFF;"></div>
<div style="left:2505.7px;top:1603.1px;width:3.2px;height:3.0px;background:#000080;"></div>
<div style="left:2511.9px;top:1599.5px;width:3.2px;height:3.2px;background:#FFFFFF;"></div>
<div style="left:2515.5px;top:1603.1px;width:3.2px;height:3.0px;background:#000080;"></div>
<div style="left:2521.6px;top:1599.5px;width:3.2px;height:3.2px;background:#FFFFFF;"></div>
<div style="left:2525.2px;top:1603.1px;width:3.2px;height:3.0px;background:#000080;"></div>
<div style="left:2531.3px;top:1599.5px;width:3.2px;height:3.2px;background:#FFFFFF;"></div>
<div style="left:2534.9px;top:1603.1px;width:3.2px;height:3.0px;background:#000080;"></div>
<div style="left:2541.1px;top:1599.5px;width:3.2px;height:3.2px;background:#FFFFFF;"></div>
<div style="left:2544.7px;top:1603.1px;width:3.2px;height:3.0px;background:#000080;"></div>
<div style="left:2550.8px;top:1599.5px;width:3.2px;height:3.2px;background:#FFFFFF;"></div>
<div style="left:2554.4px;top:1603.1px;width:3.2px;height:3.0px;background:#000080;"></div>
<div style="left:2560.5px;top:1599.5px;width:3.2px;height:3.2px;background:#FFFFFF;"></div>
<div style="left:2564.1px;top:1603.1px;width:3.2px;height:3.0px;background:#000080;"></div>
<div style="left:2570.3px;top:1599.5px;width:3.2px;height:3.2px;background:#FFFFFF;"></div>
<div style="left:2573.9px;top:1603.1px;width:3.2px;height:3.0px;background:#000080;"></div>
<div style="left:2580.0px;top:1599.5px;width:3.2px;height:3.2px;background:#FFFFFF;"></div>
<div style="left:2583.6px;top:1603.1px;width:3.2px;height:3.0px;background:#000080;"></div>
<div style="left:2589.8px;top:1599.5px;width:3.2px;height:3.2px;background:#FFFFFF;"></div>
<div style="left:2593.4px;top:1603.1px;width:3.2px;height:3.0px;background:#000080;"></div>
<div style="left:2599.5px;top:1599.5px;width:3.2px;height:3.2px;background:#FFFFFF;"></div>
<div style="left:2603.1px;top:1603.1px;width:3.2px;height:3.0px;background:#000080;"></div>
<div style="left:2609.2px;top:1599.5px;width:3.2px;height:3.2px;background:#FFFFFF;"></div>
<div style="left:2612.8px;top:1603.1px;width:3.2px;height:3.0px;background:#000080;"></div>
<div style="left:2619.0px;top:1599.5px;width:3.2px;height:3.2px;background:#FFFFFF;"></div>
<div style="left:2622.6px;top:1603.1px;width:3.2px;height:3.0px;background:#000080;"></div>
<div style="left:2628.7px;top:1599.5px;width:3.2px;height:3.2px;background:#FFFFFF;"></div>
<div style="left:2632.3px;top:1603.1px;width:3.2px;height:3.0px;background:#000080;"></div>
<div style="left:2638.4px;top:1599.5px;width:3.2px;height:3.2px;background:#FFFFFF;"></div>
<div style="left:2642.0px;top:1603.1px;width:3.2px;height:3.0px;background:#000080;"></div>
<div style="left:2648.2px;top:1599.5px;width:3.2px;height:3.2px;background:#FFFFFF;"></div>
<div style="left:2651.8px;top:1603.1px;width:3.2px;height:3.0px;background:#000080;"></div>
<div style="left:2657.9px;top:1599.5px;width:3.2px;height:3.2px;background:#FFFFFF;"></div>
<div style="left:2661.5px;top:1603.1px;width:3.2px;height:3.0px;background:#000080;"></div>
<div style="left:2667.6px;top:1599.5px;width:3.2px;height:3.2px;background:#FFFFFF;"></div>
<div style="left:2671.2px;top:1603.1px;width:3.2px;height:3.0px;background:#000080;"></div>
<div style="left:2677.4px;top:1599.5px;width:3.2px;height:3.2px;background:#FFFFFF;"></div>
<div style="left:2681.0px;top:1603.1px;width:3.2px;height:3.0px;background:#000080;"></div>
<div style="left:2412.2px;top:2208.5px;width:320.3px;height:26.5px;background:#808080;"></div>
<div style="left:2415.2px;top:2211.5px;width:314.3px;height:20.5px;background:#FFFFFF;"></div>
<div style="left:2419.2px;top:2215.5px;width:310.3px;height:16.5px;background:#D8D0C8;"></div>
<svg style="left:2434.2px;top:2218.7px" width="18" height="11"><path d="M6.8 0H10.2V3.3H13.6V6.6H17V9.9H0V6.6H3.4V3.3H6.8Z" fill="#000080"/></svg>
<svg style="left:2694.0px;top:2218.7px" width="18" height="11"><path d="M6.8 0H10.2V3.3H13.6V6.6H17V9.9H0V6.6H3.4V3.3H6.8Z" fill="#000080"/></svg>
<div style="left:2463.2px;top:2218.7px;width:3.2px;height:3.2px;background:#FFFFFF;"></div>
<div style="left:2466.8px;top:2222.3px;width:3.2px;height:3.0px;background:#000080;"></div>
<div style="left:2472.9px;top:2218.7px;width:3.2px;height:3.2px;background:#FFFFFF;"></div>
<div style="left:2476.5px;top:2222.3px;width:3.2px;height:3.0px;background:#000080;"></div>
<div style="left:2482.7px;top:2218.7px;width:3.2px;height:3.2px;background:#FFFFFF;"></div>
<div style="left:2486.3px;top:2222.3px;width:3.2px;height:3.0px;background:#000080;"></div>
<div style="left:2492.4px;top:2218.7px;width:3.2px;height:3.2px;background:#FFFFFF;"></div>
<div style="left:2496.0px;top:2222.3px;width:3.2px;height:3.0px;background:#000080;"></div>
<div style="left:2502.1px;top:2218.7px;width:3.2px;height:3.2px;background:#FFFFFF;"></div>
<div style="left:2505.7px;top:2222.3px;width:3.2px;height:3.0px;background:#000080;"></div>
<div style="left:2511.9px;top:2218.7px;width:3.2px;height:3.2px;background:#FFFFFF;"></div>
<div style="left:2515.5px;top:2222.3px;width:3.2px;height:3.0px;background:#000080;"></div>
<div style="left:2521.6px;top:2218.7px;width:3.2px;height:3.2px;background:#FFFFFF;"></div>
<div style="left:2525.2px;top:2222.3px;width:3.2px;height:3.0px;background:#000080;"></div>
<div style="left:2531.3px;top:2218.7px;width:3.2px;height:3.2px;background:#FFFFFF;"></div>
<div style="left:2534.9px;top:2222.3px;width:3.2px;height:3.0px;background:#000080;"></div>
<div style="left:2541.1px;top:2218.7px;width:3.2px;height:3.2px;background:#FFFFFF;"></div>
<div style="left:2544.7px;top:2222.3px;width:3.2px;height:3.0px;background:#000080;"></div>
<div style="left:2550.8px;top:2218.7px;width:3.2px;height:3.2px;background:#FFFFFF;"></div>
<div style="left:2554.4px;top:2222.3px;width:3.2px;height:3.0px;background:#000080;"></div>
<div style="left:2560.5px;top:2218.7px;width:3.2px;height:3.2px;background:#FFFFFF;"></div>
<div style="left:2564.1px;top:2222.3px;width:3.2px;height:3.0px;background:#000080;"></div>
<div style="left:2570.3px;top:2218.7px;width:3.2px;height:3.2px;background:#FFFFFF;"></div>
<div style="left:2573.9px;top:2222.3px;width:3.2px;height:3.0px;background:#000080;"></div>
<div style="left:2580.0px;top:2218.7px;width:3.2px;height:3.2px;background:#FFFFFF;"></div>
<div style="left:2583.6px;top:2222.3px;width:3.2px;height:3.0px;background:#000080;"></div>
<div style="left:2589.8px;top:2218.7px;width:3.2px;height:3.2px;background:#FFFFFF;"></div>
<div style="left:2593.4px;top:2222.3px;width:3.2px;height:3.0px;background:#000080;"></div>
<div style="left:2599.5px;top:2218.7px;width:3.2px;height:3.2px;background:#FFFFFF;"></div>
<div style="left:2603.1px;top:2222.3px;width:3.2px;height:3.0px;background:#000080;"></div>
<div style="left:2609.2px;top:2218.7px;width:3.2px;height:3.2px;background:#FFFFFF;"></div>
<div style="left:2612.8px;top:2222.3px;width:3.2px;height:3.0px;background:#000080;"></div>
<div style="left:2619.0px;top:2218.7px;width:3.2px;height:3.2px;background:#FFFFFF;"></div>
<div style="left:2622.6px;top:2222.3px;width:3.2px;height:3.0px;background:#000080;"></div>
<div style="left:2628.7px;top:2218.7px;width:3.2px;height:3.2px;background:#FFFFFF;"></div>
<div style="left:2632.3px;top:2222.3px;width:3.2px;height:3.0px;background:#000080;"></div>
<div style="left:2638.4px;top:2218.7px;width:3.2px;height:3.2px;background:#FFFFFF;"></div>
<div style="left:2642.0px;top:2222.3px;width:3.2px;height:3.0px;background:#000080;"></div>
<div style="left:2648.2px;top:2218.7px;width:3.2px;height:3.2px;background:#FFFFFF;"></div>
<div style="left:2651.8px;top:2222.3px;width:3.2px;height:3.0px;background:#000080;"></div>
<div style="left:2657.9px;top:2218.7px;width:3.2px;height:3.2px;background:#FFFFFF;"></div>
<div style="left:2661.5px;top:2222.3px;width:3.2px;height:3.0px;background:#000080;"></div>
<div style="left:2667.6px;top:2218.7px;width:3.2px;height:3.2px;background:#FFFFFF;"></div>
<div style="left:2671.2px;top:2222.3px;width:3.2px;height:3.0px;background:#000080;"></div>
<div style="left:2677.4px;top:2218.7px;width:3.2px;height:3.2px;background:#FFFFFF;"></div>
<div style="left:2681.0px;top:2222.3px;width:3.2px;height:3.0px;background:#000080;"></div>
<svg style="left:1816.1px;top:1180.0px" width="11" height="18"><path d="M9.6 0V17H6.4V13.6H3.2V10.2H0V6.8H3.2V3.4H6.4V0Z" fill="#000080"/></svg>
<svg style="left:1816.1px;top:1458.5px" width="11" height="18"><path d="M9.6 0V17H6.4V13.6H3.2V10.2H0V6.8H3.2V3.4H6.4V0Z" fill="#000080"/></svg>
<div style="left:1816.0px;top:1210.7px;width:3.2px;height:3.2px;background:#FFFFFF;"></div>
<div style="left:1819.4px;top:1214.3px;width:3.4px;height:3.4px;background:#000080;"></div>
<div style="left:1816.0px;top:1221.0px;width:3.2px;height:3.2px;background:#FFFFFF;"></div>
<div style="left:1819.4px;top:1224.6px;width:3.4px;height:3.4px;background:#000080;"></div>
<div style="left:1816.0px;top:1231.3px;width:3.2px;height:3.2px;background:#FFFFFF;"></div>
<div style="left:1819.4px;top:1234.9px;width:3.4px;height:3.4px;background:#000080;"></div>
<div style="left:1816.0px;top:1241.6px;width:3.2px;height:3.2px;background:#FFFFFF;"></div>
<div style="left:1819.4px;top:1245.2px;width:3.4px;height:3.4px;background:#000080;"></div>
<div style="left:1816.0px;top:1251.9px;width:3.2px;height:3.2px;background:#FFFFFF;"></div>
<div style="left:1819.4px;top:1255.5px;width:3.4px;height:3.4px;background:#000080;"></div>
<div style="left:1816.0px;top:1262.2px;width:3.2px;height:3.2px;background:#FFFFFF;"></div>
<div style="left:1819.4px;top:1265.8px;width:3.4px;height:3.4px;background:#000080;"></div>
<div style="left:1816.0px;top:1272.5px;width:3.2px;height:3.2px;background:#FFFFFF;"></div>
<div style="left:1819.4px;top:1276.1px;width:3.4px;height:3.4px;background:#000080;"></div>
<div style="left:1816.0px;top:1282.8px;width:3.2px;height:3.2px;background:#FFFFFF;"></div>
<div style="left:1819.4px;top:1286.4px;width:3.4px;height:3.4px;background:#000080;"></div>
<div style="left:1816.0px;top:1293.1px;width:3.2px;height:3.2px;background:#FFFFFF;"></div>
<div style="left:1819.4px;top:1296.7px;width:3.4px;height:3.4px;background:#000080;"></div>
<div style="left:1816.0px;top:1303.4px;width:3.2px;height:3.2px;background:#FFFFFF;"></div>
<div style="left:1819.4px;top:1307.0px;width:3.4px;height:3.4px;background:#000080;"></div>
<div style="left:1816.0px;top:1313.7px;width:3.2px;height:3.2px;background:#FFFFFF;"></div>
<div style="left:1819.4px;top:1317.3px;width:3.4px;height:3.4px;background:#000080;"></div>
<div style="left:1816.0px;top:1324.0px;width:3.2px;height:3.2px;background:#FFFFFF;"></div>
<div style="left:1819.4px;top:1327.6px;width:3.4px;height:3.4px;background:#000080;"></div>
<div style="left:1816.0px;top:1334.3px;width:3.2px;height:3.2px;background:#FFFFFF;"></div>
<div style="left:1819.4px;top:1337.9px;width:3.4px;height:3.4px;background:#000080;"></div>
<div style="left:1816.0px;top:1344.6px;width:3.2px;height:3.2px;background:#FFFFFF;"></div>
<div style="left:1819.4px;top:1348.2px;width:3.4px;height:3.4px;background:#000080;"></div>
<div style="left:1816.0px;top:1354.9px;width:3.2px;height:3.2px;background:#FFFFFF;"></div>
<div style="left:1819.4px;top:1358.5px;width:3.4px;height:3.4px;background:#000080;"></div>
<div style="left:1816.0px;top:1365.2px;width:3.2px;height:3.2px;background:#FFFFFF;"></div>
<div style="left:1819.4px;top:1368.8px;width:3.4px;height:3.4px;background:#000080;"></div>
<div style="left:1816.0px;top:1375.5px;width:3.2px;height:3.2px;background:#FFFFFF;"></div>
<div style="left:1819.4px;top:1379.1px;width:3.4px;height:3.4px;background:#000080;"></div>
<div style="left:1816.0px;top:1385.8px;width:3.2px;height:3.2px;background:#FFFFFF;"></div>
<div style="left:1819.4px;top:1389.4px;width:3.4px;height:3.4px;background:#000080;"></div>
<div style="left:1816.0px;top:1396.1px;width:3.2px;height:3.2px;background:#FFFFFF;"></div>
<div style="left:1819.4px;top:1399.7px;width:3.4px;height:3.4px;background:#000080;"></div>
<div style="left:1816.0px;top:1406.4px;width:3.2px;height:3.2px;background:#FFFFFF;"></div>
<div style="left:1819.4px;top:1410.0px;width:3.4px;height:3.4px;background:#000080;"></div>
<div style="left:1816.0px;top:1416.7px;width:3.2px;height:3.2px;background:#FFFFFF;"></div>
<div style="left:1819.4px;top:1420.3px;width:3.4px;height:3.4px;background:#000080;"></div>
<div style="left:1816.0px;top:1427.0px;width:3.2px;height:3.2px;background:#FFFFFF;"></div>
<div style="left:1819.4px;top:1430.6px;width:3.4px;height:3.4px;background:#000080;"></div>
<div style="left:1816.0px;top:1437.3px;width:3.2px;height:3.2px;background:#FFFFFF;"></div>
<div style="left:1819.4px;top:1440.9px;width:3.4px;height:3.4px;background:#000080;"></div>
<div style="left:2046.1px;top:635.5px;width:1193.3px;height:809.1px;background:#000;"></div>
<div style="left:2049.3px;top:638.7px;width:1186.9px;height:802.7px;background:#fff;"></div>
<span class="t" style="left:2231.7px;top:558.8px;font-size:47.10px;color:#000;transform:scaleX(1.0311);font-weight:bold;-webkit-text-stroke:2.2px #000;">Log</span>
<span class="t" style="left:2341.5px;top:558.8px;font-size:47.10px;color:#000;transform:scaleX(1.1500);font-weight:bold;-webkit-text-stroke:2.2px #000;">Amplification</span>
<span class="t" style="left:2705.5px;top:558.8px;font-size:47.10px;color:#000;transform:scaleX(1.0803);font-weight:bold;-webkit-text-stroke:2.2px #000;">Curves</span>
<span class="t" style="left:1946.1px;top:667.2px;font-size:36.96px;color:#000;transform:scaleX(0.9342);">0.505</span>
<div style="left:2035.0px;top:683.9px;width:12.6px;height:3.0px;background:#808080;"></div>
<span class="t" style="left:1946.1px;top:752.7px;font-size:36.96px;color:#000;transform:scaleX(0.9342);">0.305</span>
<div style="left:2035.0px;top:769.4px;width:12.6px;height:3.0px;background:#808080;"></div>
<span class="t" style="left:1946.1px;top:838.2px;font-size:36.96px;color:#000;transform:scaleX(0.9342);">0.105</span>
<div style="left:2035.0px;top:854.9px;width:12.6px;height:3.0px;background:#808080;"></div>
<span class="t" style="left:1934.7px;top:923.7px;font-size:36.96px;color:#000;transform:scaleX(0.9335);">-0.095</span>
<div style="left:2035.0px;top:940.4px;width:12.6px;height:3.0px;background:#808080;"></div>
<span class="t" style="left:1934.7px;top:1009.2px;font-size:36.96px;color:#000;transform:scaleX(0.9335);">-0.295</span>
<div style="left:2035.0px;top:1025.9px;width:12.6px;height:3.0px;background:#808080;"></div>
<span class="t" style="left:1934.7px;top:1094.7px;font-size:36.96px;color:#000;transform:scaleX(0.9335);">-0.495</span>
<div style="left:2035.0px;top:1111.4px;width:12.6px;height:3.0px;background:#808080;"></div>
<span class="t" style="left:1934.7px;top:1180.2px;font-size:36.96px;color:#000;transform:scaleX(0.9335);">-0.695</span>
<div style="left:2035.0px;top:1196.9px;width:12.6px;height:3.0px;background:#808080;"></div>
<span class="t" style="left:1934.7px;top:1265.7px;font-size:36.96px;color:#000;transform:scaleX(0.9335);">-0.895</span>
<div style="left:2035.0px;top:1282.4px;width:12.6px;height:3.0px;background:#808080;"></div>
<span class="t" style="left:1934.7px;top:1351.2px;font-size:36.96px;color:#000;transform:scaleX(0.9335);">-1.095</span>
<div style="left:2035.0px;top:1367.9px;width:12.6px;height:3.0px;background:#808080;"></div>
<div style="left:2040.4px;top:705.3px;width:7.2px;height:3.0px;background:#808080;"></div>
<div style="left:2040.4px;top:726.6px;width:7.2px;height:3.0px;background:#808080;"></div>
<div style="left:2040.4px;top:748.0px;width:7.2px;height:3.0px;background:#808080;"></div>
<div style="left:2040.4px;top:790.8px;width:7.2px;height:3.0px;background:#808080;"></div>
<div style="left:2040.4px;top:812.1px;width:7.2px;height:3.0px;background:#808080;"></div>
<div style="left:2040.4px;top:833.5px;width:7.2px;height:3.0px;background:#808080;"></div>
<div style="left:2040.4px;top:876.3px;width:7.2px;height:3.0px;background:#808080;"></div>
<div style="left:2040.4px;top:897.6px;width:7.2px;height:3.0px;background:#808080;"></div>
<div style="left:2040.4px;top:919.0px;width:7.2px;height:3.0px;background:#808080;"></div>
<div style="left:2040.4px;top:961.8px;width:7.2px;height:3.0px;background:#808080;"></div>
<div style="left:2040.4px;top:983.1px;width:7.2px;height:3.0px;background:#808080;"></div>
<div style="left:2040.4px;top:1004.5px;width:7.2px;height:3.0px;background:#808080;"></div>
<div style="left:2040.4px;top:1047.3px;width:7.2px;height:3.0px;background:#808080;"></div>
<div style="left:2040.4px;top:1068.7px;width:7.2px;height:3.0px;background:#808080;"></div>
<div style="left:2040.4px;top:1090.0px;width:7.2px;height:3.0px;background:#808080;"></div>
<div style="left:2040.4px;top:1132.8px;width:7.2px;height:3.0px;background:#808080;"></div>
<div style="left:2040.4px;top:1154.2px;width:7.2px;height:3.0px;background:#808080;"></div>
<div style="left:2040.4px;top:1175.5px;width:7.2px;height:3.0px;background:#808080;"></div>
<div style="left:2040.4px;top:1218.3px;width:7.2px;height:3.0px;background:#808080;"></div>
<div style="left:2040.4px;top:1239.7px;width:7.2px;height:3.0px;background:#808080;"></div>
<div style="left:2040.4px;top:1261.0px;width:7.2px;height:3.0px;background:#808080;"></div>
<div style="left:2040.4px;top:1303.8px;width:7.2px;height:3.0px;background:#808080;"></div>
<div style="left:2040.4px;top:1325.2px;width:7.2px;height:3.0px;background:#808080;"></div>
<div style="left:2040.4px;top:1346.5px;width:7.2px;height:3.0px;background:#808080;"></div>
<div style="left:2040.4px;top:1389.3px;width:7.2px;height:3.0px;background:#808080;"></div>
<div style="left:2046.9px;top:1444.6px;width:3.0px;height:14.0px;background:#808080;"></div>
<span class="t" style="left:2026.6px;top:1461.7px;font-size:36.67px;color:#000;transform:scaleX(0.8580);">27</span>
<div style="left:2113.2px;top:1444.6px;width:3.0px;height:14.0px;background:#808080;"></div>
<span class="t" style="left:2092.8px;top:1461.7px;font-size:36.67px;color:#000;transform:scaleX(0.8580);">28</span>
<div style="left:2179.4px;top:1444.6px;width:3.0px;height:14.0px;background:#808080;"></div>
<span class="t" style="left:2159.1px;top:1461.7px;font-size:36.67px;color:#000;transform:scaleX(0.8580);">29</span>
<div style="left:2245.7px;top:1444.6px;width:3.0px;height:14.0px;background:#808080;"></div>
<span class="t" style="left:2225.3px;top:1461.7px;font-size:36.67px;color:#000;transform:scaleX(0.8580);">30</span>
<div style="left:2311.9px;top:1444.6px;width:3.0px;height:14.0px;background:#808080;"></div>
<span class="t" style="left:2291.6px;top:1461.7px;font-size:36.67px;color:#000;transform:scaleX(0.8580);">31</span>
<div style="left:2378.2px;top:1444.6px;width:3.0px;height:14.0px;background:#808080;"></div>
<span class="t" style="left:2357.8px;top:1461.7px;font-size:36.67px;color:#000;transform:scaleX(0.8580);">32</span>
<div style="left:2444.4px;top:1444.6px;width:3.0px;height:14.0px;background:#808080;"></div>
<span class="t" style="left:2424.1px;top:1461.7px;font-size:36.67px;color:#000;transform:scaleX(0.8580);">33</span>
<div style="left:2510.7px;top:1444.6px;width:3.0px;height:14.0px;background:#808080;"></div>
<span class="t" style="left:2490.3px;top:1461.7px;font-size:36.67px;color:#000;transform:scaleX(0.8580);">34</span>
<div style="left:2576.9px;top:1444.6px;width:3.0px;height:14.0px;background:#808080;"></div>
<span class="t" style="left:2556.6px;top:1461.7px;font-size:36.67px;color:#000;transform:scaleX(0.8580);">35</span>
<div style="left:2643.2px;top:1444.6px;width:3.0px;height:14.0px;background:#808080;"></div>
<span class="t" style="left:2622.8px;top:1461.7px;font-size:36.67px;color:#000;transform:scaleX(0.8580);">36</span>
<div style="left:2709.4px;top:1444.6px;width:3.0px;height:14.0px;background:#808080;"></div>
<span class="t" style="left:2689.1px;top:1461.7px;font-size:36.67px;color:#000;transform:scaleX(0.8580);">37</span>
<div style="left:2775.7px;top:1444.6px;width:3.0px;height:14.0px;background:#808080;"></div>
<span class="t" style="left:2755.3px;top:1461.7px;font-size:36.67px;color:#000;transform:scaleX(0.8580);">38</span>
<div style="left:2841.9px;top:1444.6px;width:3.0px;height:14.0px;background:#808080;"></div>
<span class="t" style="left:2821.6px;top:1461.7px;font-size:36.67px;color:#000;transform:scaleX(0.8580);">39</span>
<div style="left:2908.2px;top:1444.6px;width:3.0px;height:14.0px;background:#808080;"></div>
<span class="t" style="left:2887.8px;top:1461.7px;font-size:36.67px;color:#000;transform:scaleX(0.8580);">40</span>
<div style="left:2974.4px;top:1444.6px;width:3.0px;height:14.0px;background:#808080;"></div>
<span class="t" style="left:2954.1px;top:1461.7px;font-size:36.67px;color:#000;transform:scaleX(0.8580);">41</span>
<div style="left:3040.7px;top:1444.6px;width:3.0px;height:14.0px;background:#808080;"></div>
<span class="t" style="left:3020.3px;top:1461.7px;font-size:36.67px;color:#000;transform:scaleX(0.8580);">42</span>
<div style="left:3106.9px;top:1444.6px;width:3.0px;height:14.0px;background:#808080;"></div>
<span class="t" style="left:3086.6px;top:1461.7px;font-size:36.67px;color:#000;transform:scaleX(0.8580);">43</span>
<div style="left:3173.2px;top:1444.6px;width:3.0px;height:14.0px;background:#808080;"></div>
<span class="t" style="left:3152.8px;top:1461.7px;font-size:36.67px;color:#000;transform:scaleX(0.8580);">44</span>
<div style="left:3239.4px;top:1444.6px;width:3.0px;height:14.0px;background:#808080;"></div>
<span class="t" style="left:3219.1px;top:1461.7px;font-size:36.67px;color:#000;transform:scaleX(0.8580);">45</span>
<span class="t" style="left:2577.5px;top:1510.1px;font-size:36.67px;color:#000;transform:scaleX(0.9894);font-weight:bold;">Cycles</span>
<span class="t" style="left:1884.5px;top:1283.0px;font-family:'Liberation Sans';font-size:36.67px;font-weight:bold;transform:rotate(-90deg) scaleX(1.0180)">log Fluorescence</span>
<span class="t" style="left:1884.3px;top:961.0px;font-family:'Liberation Serif';font-size:38.33px;font-weight:bold;transform:rotate(-90deg) scaleX(1.0580)">(530/640)</span>
<span class="t" style="left:2218.2px;top:942.1px;font-size:39.86px;color:#000;transform:scaleX(0.8556);">10240</span>
<span class="t" style="left:2367.8px;top:986.7px;font-size:39.86px;color:#000;transform:scaleX(0.8221);">1280</span>
<span class="t" style="left:2526.6px;top:1039.0px;font-size:39.86px;color:#000;transform:scaleX(0.8441);">160</span>
<span class="t" style="left:2693.8px;top:1082.4px;font-size:39.86px;color:#000;transform:scaleX(0.8097);">40</span>
<span class="t" style="left:2680.4px;top:1289.3px;font-size:39.86px;color:#000;transform:scaleX(0.8611);">proba 344</span>
<div style="left:2372.6px;top:1742.8px;width:873.2px;height:306.9px;background:#000;"></div>
<div style="left:2375.8px;top:1746.0px;width:866.8px;height:300.5px;background:#fff;"></div>
<span class="t" style="left:2555.6px;top:1667.1px;font-size:46.38px;color:#000;transform:scaleX(1.1341);font-weight:bold;-webkit-text-stroke:2.2px #000;">Standard</span>
<span class="t" style="left:2808.0px;top:1667.1px;font-size:46.38px;color:#000;transform:scaleX(1.0876);font-weight:bold;-webkit-text-stroke:2.2px #000;">Curve</span>
<span class="t" style="left:2318.8px;top:1748.2px;font-size:36.96px;color:#000;transform:scaleX(0.9300);">36</span>
<div style="left:2360.0px;top:1763.9px;width:14.1px;height:3.0px;background:#808080;"></div>
<span class="t" style="left:2318.8px;top:1803.8px;font-size:36.96px;color:#000;transform:scaleX(0.9300);">34</span>
<div style="left:2360.0px;top:1819.5px;width:14.1px;height:3.0px;background:#808080;"></div>
<span class="t" style="left:2318.8px;top:1858.6px;font-size:36.96px;color:#000;transform:scaleX(0.9300);">32</span>
<div style="left:2360.0px;top:1874.3px;width:14.1px;height:3.0px;background:#808080;"></div>
<span class="t" style="left:2318.8px;top:1916.8px;font-size:36.96px;color:#000;transform:scaleX(0.9300);">30</span>
<div style="left:2360.0px;top:1932.5px;width:14.1px;height:3.0px;background:#808080;"></div>
<span class="t" style="left:2318.8px;top:1971.5px;font-size:36.96px;color:#000;transform:scaleX(0.9300);">28</span>
<div style="left:2360.0px;top:1987.2px;width:14.1px;height:3.0px;background:#808080;"></div>
<div style="left:2366.0px;top:1777.8px;width:8.1px;height:3.0px;background:#808080;"></div>
<div style="left:2366.0px;top:1791.7px;width:8.1px;height:3.0px;background:#808080;"></div>
<div style="left:2366.0px;top:1805.6px;width:8.1px;height:3.0px;background:#808080;"></div>
<div style="left:2366.0px;top:1833.4px;width:8.1px;height:3.0px;background:#808080;"></div>
<div style="left:2366.0px;top:1847.3px;width:8.1px;height:3.0px;background:#808080;"></div>
<div style="left:2366.0px;top:1861.2px;width:8.1px;height:3.0px;background:#808080;"></div>
<div style="left:2366.0px;top:1889.0px;width:8.1px;height:3.0px;background:#808080;"></div>
<div style="left:2366.0px;top:1902.9px;width:8.1px;height:3.0px;background:#808080;"></div>
<div style="left:2366.0px;top:1916.8px;width:8.1px;height:3.0px;background:#808080;"></div>
<div style="left:2366.0px;top:1944.6px;width:8.1px;height:3.0px;background:#808080;"></div>
<div style="left:2366.0px;top:1958.5px;width:8.1px;height:3.0px;background:#808080;"></div>
<div style="left:2366.0px;top:1972.4px;width:8.1px;height:3.0px;background:#808080;"></div>
<div style="left:2366.0px;top:2000.2px;width:8.1px;height:3.0px;background:#808080;"></div>
<div style="left:2366.0px;top:2014.1px;width:8.1px;height:3.0px;background:#808080;"></div>
<div style="left:2536.4px;top:2049.7px;width:3.0px;height:14.0px;background:#808080;"></div>
<span class="t" style="left:2525.4px;top:2066.1px;font-size:36.96px;color:#000;transform:scaleX(0.9300);">2</span>
<div style="left:2879.9px;top:2049.7px;width:3.0px;height:14.0px;background:#808080;"></div>
<span class="t" style="left:2868.9px;top:2066.1px;font-size:36.96px;color:#000;transform:scaleX(0.9300);">3</span>
<div style="left:3226.2px;top:2049.7px;width:3.0px;height:14.0px;background:#808080;"></div>
<span class="t" style="left:3215.2px;top:2066.1px;font-size:36.96px;color:#000;transform:scaleX(0.9300);">4</span>
<span class="t" style="left:2641.2px;top:2114.3px;font-size:38.41px;color:#000;transform:scaleX(0.9545);font-weight:bold;">Log Concentration</span>
<span class="t" style="left:2273.6px;top:2033.0px;font-family:'Liberation Sans';font-size:36.67px;font-weight:bold;transform:rotate(-90deg) scaleX(1.0391)">Crossing Point</span>
<span class="t" style="left:1946.4px;top:1870.2px;font-size:41.45px;color:#000;transform:scaleX(0.7836);">Error: 0.0581</span>
<span class="t" style="left:1917.8px;top:1915.7px;font-size:41.45px;color:#000;transform:scaleX(0.8233);">Efficiency: 1.924</span>
<svg style="left:0;top:0" width="3339" height="2646" viewBox="0 0 3339 2646" fill="none" stroke-width="2.9" stroke-linejoin="round"><path d="M2049.6 1232.7H3236.4" stroke="#FF0000" stroke-width="3.4"/><path d="M2775.4 1270.8 C2779.5 1267.3 2792.2 1256.3 2800.1 1249.8 C2808.0 1243.2 2815.6 1237.5 2822.6 1231.5 C2829.6 1225.5 2832.8 1220.8 2842.2 1213.9 C2851.6 1207.0 2865.7 1198.0 2878.8 1190.2 C2891.9 1182.4 2906.9 1174.1 2920.9 1166.9 C2934.9 1159.7 2948.9 1153.1 2963.0 1147.2 C2977.1 1141.3 2988.8 1137.2 3005.2 1131.8 C3021.6 1126.4 3042.6 1120.1 3061.3 1114.9 C3080.0 1109.8 3098.8 1105.4 3117.5 1100.9 C3136.2 1096.4 3153.8 1091.7 3173.7 1087.9 C3193.6 1084.1 3226.4 1079.6 3237.0 1077.9" stroke="#FFA080"/><path d="M2775.4 1266.6 C2776.7 1264.7 2779.4 1259.9 2783.3 1255.4 C2787.2 1251.0 2795.4 1244.4 2798.7 1239.9 C2802.0 1235.5 2800.3 1232.7 2802.9 1228.7 C2805.5 1224.7 2809.5 1221.7 2814.2 1216.1 C2818.9 1210.5 2825.4 1201.5 2831.0 1195.0 C2836.6 1188.5 2842.3 1182.9 2847.9 1177.3 C2853.5 1171.7 2858.6 1166.9 2864.7 1161.3 C2870.8 1155.7 2876.9 1150.3 2884.4 1143.8 C2891.9 1137.2 2898.9 1129.5 2909.7 1122.0 C2920.5 1114.5 2935.4 1106.0 2949.0 1098.5 C2962.6 1091.0 2977.0 1083.8 2991.1 1077.0 C3005.2 1070.2 3016.9 1064.6 3033.3 1057.8 C3049.7 1051.0 3070.7 1042.9 3089.4 1036.3 C3108.1 1029.7 3126.9 1023.1 3145.6 1018.0 C3164.3 1012.9 3186.6 1008.7 3201.8 1005.4 C3217.0 1002.1 3231.1 999.6 3237.0 998.4" stroke="#C828A8"/><path d="M2774.8 1230.1 C2777.6 1226.6 2783.7 1218.8 2791.7 1209.0 C2799.7 1199.2 2814.2 1180.9 2822.6 1171.1 C2831.0 1161.3 2832.8 1158.2 2842.2 1150.1 C2851.6 1142.0 2867.6 1130.7 2878.8 1122.4 C2890.1 1114.1 2898.0 1107.1 2909.7 1100.1 C2921.4 1093.1 2935.4 1087.0 2949.0 1080.2 C2962.6 1073.4 2977.0 1066.0 2991.1 1059.2 C3005.2 1052.5 3016.9 1046.1 3033.3 1039.7 C3049.7 1033.3 3070.7 1026.8 3089.4 1020.8 C3108.1 1014.8 3126.9 1008.7 3145.6 1004.0 C3164.3 999.3 3186.6 995.9 3201.8 992.8 C3217.0 989.7 3231.1 986.5 3237.0 985.2" stroke="#008080"/><path d="M2576.0 1282.1 C2578.0 1279.5 2581.4 1274.8 2587.8 1266.6 C2594.2 1258.4 2607.4 1241.8 2614.4 1232.9 C2621.4 1224.0 2625.6 1218.5 2629.9 1213.3 C2634.2 1208.1 2635.5 1206.5 2640.0 1202.0 C2644.5 1197.5 2650.8 1192.2 2656.9 1186.6 C2663.0 1181.0 2667.6 1176.5 2676.5 1168.3 C2685.4 1160.1 2701.3 1144.2 2710.2 1137.4 C2719.1 1130.6 2724.8 1130.6 2729.9 1127.6 C2735.1 1124.6 2733.6 1124.1 2741.1 1119.2 C2748.6 1114.3 2763.6 1104.4 2774.8 1098.1 C2786.0 1091.8 2798.2 1086.2 2808.5 1081.2 C2818.8 1076.2 2824.9 1072.2 2836.6 1067.8 C2848.3 1063.4 2864.8 1058.9 2878.8 1054.6 C2892.9 1050.3 2906.9 1046.1 2920.9 1041.9 C2934.9 1037.7 2948.9 1033.0 2963.0 1029.3 C2977.1 1025.6 2988.8 1023.5 3005.2 1020.0 C3021.6 1016.5 3042.6 1012.3 3061.3 1008.2 C3080.0 1004.1 3098.8 999.4 3117.5 995.6 C3136.2 991.9 3153.8 988.5 3173.7 985.7 C3193.6 982.9 3226.4 979.9 3237.0 978.7" stroke="#000000"/><path d="M2707.4 1254.0 C2710.2 1250.5 2719.6 1239.2 2724.3 1232.9 C2729.0 1226.6 2728.5 1225.5 2735.5 1216.1 C2742.5 1206.7 2758.0 1186.8 2766.4 1176.7 C2774.8 1166.6 2779.1 1162.8 2786.1 1155.7 C2793.1 1148.6 2799.2 1142.4 2808.5 1134.0 C2817.8 1125.6 2830.5 1113.4 2842.2 1105.1 C2853.9 1096.8 2865.7 1091.3 2878.8 1084.0 C2891.9 1076.7 2906.9 1068.5 2920.9 1061.0 C2934.9 1053.5 2948.9 1045.4 2963.0 1038.7 C2977.1 1032.0 2988.8 1026.3 3005.2 1020.8 C3021.6 1015.2 3042.6 1010.5 3061.3 1005.4 C3080.0 1000.3 3098.8 995.0 3117.5 990.3 C3136.2 985.5 3153.8 980.7 3173.7 976.9 C3193.6 973.1 3226.4 969.1 3237.0 967.5" stroke="#E08000"/><path d="M2445.1 1247.5 C2446.3 1246.2 2451.1 1242.4 2452.4 1239.9 C2453.7 1237.4 2451.6 1235.0 2452.9 1232.4 C2454.2 1229.8 2456.7 1228.6 2460.0 1224.5 C2463.3 1220.4 2465.3 1217.7 2472.6 1207.6 C2479.8 1197.5 2494.1 1176.0 2503.5 1164.0 C2512.9 1152.0 2519.4 1145.0 2528.8 1135.5 C2538.2 1126.0 2550.8 1114.9 2559.7 1107.0 C2568.6 1099.1 2572.8 1096.1 2582.1 1088.3 C2591.4 1080.5 2606.2 1067.6 2615.8 1060.2 C2625.5 1052.8 2630.3 1050.3 2640.0 1044.0 C2649.7 1037.7 2659.6 1029.8 2673.7 1022.2 C2687.8 1014.6 2707.9 1006.0 2724.3 998.4 C2740.7 990.8 2755.6 983.3 2772.0 976.5 C2788.4 969.7 2803.4 963.6 2822.6 957.6 C2841.8 951.6 2866.1 946.2 2887.2 940.8 C2908.3 935.4 2929.3 930.0 2949.0 925.3 C2968.7 920.6 2984.6 916.4 3005.2 912.7 C3025.8 909.0 3050.6 906.2 3072.6 902.9 C3094.6 899.6 3115.7 895.7 3137.2 893.0 C3158.7 890.3 3185.2 888.1 3201.8 886.9 C3218.4 885.7 3231.1 886.1 3237.0 886.0" stroke="#FF0000"/><path d="M2246.5 1247.5 C2248.1 1245.0 2250.9 1240.5 2256.3 1232.4 C2261.7 1224.4 2270.4 1211.8 2278.8 1199.2 C2287.2 1186.7 2296.1 1170.4 2306.9 1157.1 C2317.7 1143.8 2330.8 1131.8 2343.4 1119.2 C2356.0 1106.6 2367.7 1094.1 2382.7 1081.2 C2397.7 1068.3 2415.5 1054.3 2433.3 1041.9 C2451.1 1029.5 2470.7 1017.6 2489.4 1006.8 C2508.1 996.0 2526.9 986.0 2545.6 977.3 C2564.3 968.6 2586.1 960.7 2601.8 954.8 C2617.5 948.9 2626.6 946.5 2640.0 941.8 C2653.4 937.1 2666.7 931.6 2682.1 926.7 C2697.5 921.9 2715.4 916.9 2732.7 912.7 C2750.0 908.5 2766.4 905.5 2786.1 901.5 C2805.8 897.5 2828.2 892.5 2850.7 888.8 C2873.2 885.0 2897.5 882.5 2920.9 879.0 C2944.3 875.5 2965.8 870.6 2991.1 867.8 C3016.4 865.0 3046.8 864.0 3072.6 862.1 C3098.3 860.2 3118.2 858.4 3145.6 856.5 C3173.0 854.6 3221.8 851.8 3237.0 850.9" stroke="#00FF00"/><path d="M2048.4 1232.9 C2052.6 1227.3 2064.1 1211.6 2073.7 1199.2 C2083.3 1186.8 2092.9 1173.7 2106.0 1158.5 C2119.1 1143.3 2137.7 1123.6 2152.4 1107.9 C2167.2 1092.2 2178.1 1078.7 2194.5 1064.4 C2210.9 1050.1 2229.6 1035.8 2250.7 1022.2 C2271.8 1008.6 2299.8 993.9 2320.9 982.9 C2342.0 971.9 2353.7 965.8 2377.1 956.2 C2400.5 946.6 2433.2 933.5 2461.3 925.3 C2489.4 917.1 2515.8 913.6 2545.6 907.1 C2575.4 900.6 2615.8 890.7 2640.0 886.0 C2664.2 881.3 2671.9 881.3 2690.6 879.0 C2709.3 876.7 2732.8 874.6 2752.4 872.0 C2772.1 869.4 2788.4 866.1 2808.5 863.5 C2828.6 860.9 2851.1 858.6 2873.1 856.5 C2895.1 854.4 2918.6 852.5 2940.6 850.9 C2962.6 849.3 2983.2 848.3 3005.2 846.7 C3027.2 845.1 3050.6 842.7 3072.6 841.1 C3094.6 839.5 3109.8 838.0 3137.2 837.4 C3164.6 836.8 3220.4 837.4 3237.0 837.4" stroke="#0000FF"/><path d="M2386.7 1775.5 L2607.3 1843.4 L2918 1925.5 L3229 2014.9" stroke="#0000FF" stroke-width="2.9"/></svg>
<svg style="left:2387.5px;top:1763.7px" width="22" height="22"><path d="M7.5 0H14.5V3.5H18.5V7.5H22V14.5H18.5V18.5H14.5V22H7.5V18.5H3.5V14.5H0V7.5H3.5V3.5H7.5Z" fill="#00FF00"/></svg>
<svg style="left:2596.3px;top:1832.4px" width="22" height="22"><path d="M7.5 0H14.5V3.5H18.5V7.5H22V14.5H18.5V18.5H14.5V22H7.5V18.5H3.5V14.5H0V7.5H3.5V3.5H7.5Z" fill="#00FF00"/></svg>
<svg style="left:2907.0px;top:1914.5px" width="22" height="22"><path d="M7.5 0H14.5V3.5H18.5V7.5H22V14.5H18.5V18.5H14.5V22H7.5V18.5H3.5V14.5H0V7.5H3.5V3.5H7.5Z" fill="#00FF00"/></svg>
<svg style="left:3218.0px;top:2003.9px" width="22" height="22"><path d="M7.5 0H14.5V3.5H18.5V7.5H22V14.5H18.5V18.5H14.5V22H7.5V18.5H3.5V14.5H0V7.5H3.5V3.5H7.5Z" fill="#00FF00"/></svg>
<div style="left:1835.0px;top:2239.0px;width:1471.0px;height:75.5px;background:#FFFFFF;"></div>
<div style="left:1835.0px;top:2239.0px;width:1471.0px;height:71.6px;background:#808080;"></div>
<div style="left:1838.2px;top:2242.5px;width:1464.8px;height:65.0px;background:#FFFFFF;"></div>
<div style="left:1842.0px;top:2245.8px;width:1461.0px;height:61.7px;background:#D8D0C8;"></div>
<span class="t" style="left:1860.9px;top:2253.4px;font-size:44.20px;color:#000;transform:scaleX(0.7592);">Analysis Notes</span>
<div style="left:27.0px;top:2325.0px;width:3282.7px;height:6.2px;background:#808080;"></div>
<div style="left:27.0px;top:2331.2px;width:5.5px;height:23.1px;background:#808080;"></div>
<div style="left:34.0px;top:2331.2px;width:3268.4px;height:21.1px;background:#FFFFFF;"></div>
<div style="left:37.3px;top:2334.8px;width:3261.7px;height:17.5px;background:#D8D0C8;"></div>
<div style="left:3299.0px;top:2331.2px;width:3.4px;height:21.1px;background:#808080;"></div>
<div style="left:182.8px;top:2338.4px;width:2.6px;height:13.9px;background:#808080;"></div>
<div style="left:185.4px;top:2338.4px;width:2.6px;height:13.9px;background:#FFFFFF;"></div>
<div style="left:329.8px;top:2338.4px;width:2.6px;height:13.9px;background:#808080;"></div>
<div style="left:332.4px;top:2338.4px;width:2.6px;height:13.9px;background:#FFFFFF;"></div>
<div style="left:477.8px;top:2338.4px;width:2.6px;height:13.9px;background:#808080;"></div>
<div style="left:480.4px;top:2338.4px;width:2.6px;height:13.9px;background:#FFFFFF;"></div>
<div style="left:46.4px;top:2346.0px;width:16.7px;height:3.4px;background:#000;"></div>
<div style="left:223.2px;top:2346.0px;width:16.7px;height:3.4px;background:#000;"></div>
<div style="left:370.7px;top:2346.0px;width:19.5px;height:3.4px;background:#000;"></div>
<div style="left:53.0px;top:2346.0px;width:3.4px;height:6.3px;background:#000;"></div>
<div style="left:223.2px;top:2346.0px;width:3.4px;height:6.3px;background:#000;"></div>
<div style="left:238.0px;top:2349.0px;width:3.4px;height:3.3px;background:#000;"></div>
<div style="left:268.5px;top:2349.4px;width:3.4px;height:2.9px;background:#000;"></div>
<div style="left:378.5px;top:2346.0px;width:3.4px;height:6.3px;background:#000;"></div>
<div style="left:393.5px;top:2346.0px;width:3.4px;height:3.4px;background:#000;"></div>
<div style="left:492.3px;top:2346.0px;width:3.4px;height:6.3px;background:#000;"></div>
<div style="left:511.2px;top:2346.0px;width:3.4px;height:6.3px;background:#000;"></div>
<div style="left:3234.4px;top:2338.0px;width:58.4px;height:14.3px;background:#FFFFFF;"></div>
<div style="left:3237.6px;top:2341.4px;width:55.2px;height:10.9px;background:#D8D0C8;"></div>
<div style="left:3289.5px;top:2341.4px;width:3.3px;height:10.9px;background:#000;"></div>
<div style="left:27.0px;top:2352.3px;width:3282.7px;height:6.7px;background:#FFFFFF;"></div>
<div style="left:34.0px;top:2366.2px;width:480.9px;height:75.2px;background:#FFFFFF;"></div>
<div style="left:34.0px;top:2366.2px;width:477.3px;height:71.6px;background:#808080;"></div>
<div style="left:37.4px;top:2369.6px;width:473.9px;height:68.2px;background:repeating-conic-gradient(#fff 0% 25%,#D8D0C8 0% 50%) 0 0/6.4px 6.72px;"></div>
<span class="t" style="left:114.0px;top:2389.0px;font-size:41.16px;color:#000;transform:scaleX(0.9396);font-weight:bold;">OMG probe SOIA D...</span>
<div style="left:27.0px;top:2455.9px;width:3282.7px;height:3.3px;background:#808080;"></div>
<div style="left:27.0px;top:2459.0px;width:3.6px;height:55.0px;background:#808080;"></div>
<span class="t" style="left:31.1px;top:2468.1px;font-size:37.83px;color:#000;transform:scaleX(0.8973);">Logged on to My Computer as System Admin</span>
<div style="left:27.0px;top:2514.8px;width:3282.7px;height:3.6px;background:#FFFFFF;"></div>
<div style="left:27.0px;top:2522.0px;width:3282.7px;height:3.4px;background:#FFFFFF;"></div>
<div style="left:34.1px;top:2532.2px;width:176.3px;height:75.7px;background:#404040;"></div>
<div style="left:34.1px;top:2532.2px;width:173.1px;height:72.5px;background:#FFFFFF;"></div>
<div style="left:37.3px;top:2535.4px;width:169.8px;height:69.2px;background:#808080;"></div>
<div style="left:37.3px;top:2535.4px;width:166.6px;height:66.0px;background:#D8D0C8;"></div>
<span class="t" style="left:104.8px;top:2552.0px;font-size:37.68px;color:#000;transform:scaleX(1.0487);font-weight:bold;">Start</span>
<div style="left:220.0px;top:2532.0px;width:3.2px;height:74.0px;background:#808080;"></div>
<div style="left:223.2px;top:2532.0px;width:3.2px;height:74.0px;background:#FFFFFF;"></div>
<div style="left:424.7px;top:2532.0px;width:3.2px;height:74.0px;background:#808080;"></div>
<div style="left:427.9px;top:2532.0px;width:3.2px;height:74.0px;background:#FFFFFF;"></div>
<div style="left:232.7px;top:2540.0px;width:9.6px;height:60.0px;background:#808080;"></div>
<div style="left:232.7px;top:2540.0px;width:6.4px;height:57.0px;background:#FFFFFF;"></div>
<div style="left:235.9px;top:2543.0px;width:3.2px;height:54.0px;background:#D8D0C8;"></div>
<div style="left:438.0px;top:2540.0px;width:9.6px;height:60.0px;background:#808080;"></div>
<div style="left:438.0px;top:2540.0px;width:6.4px;height:57.0px;background:#FFFFFF;"></div>
<div style="left:441.2px;top:2543.0px;width:3.2px;height:54.0px;background:#D8D0C8;"></div>
<div style="left:460.4px;top:2532.2px;width:510.6px;height:75.7px;background:#FFFFFF;"></div>
<div style="left:460.4px;top:2532.2px;width:507.4px;height:72.5px;background:#404040;"></div>
<div style="left:463.6px;top:2535.4px;width:504.1px;height:69.2px;background:#D8D0C8;"></div>
<div style="left:463.6px;top:2535.4px;width:500.9px;height:66.0px;background:#808080;"></div>
<div style="left:466.9px;top:2538.7px;width:497.6px;height:62.7px;background:repeating-conic-gradient(#fff 0% 25%,#D8D0C8 0% 50%) 0 0/6.4px 6.72px;"></div>
<span class="t" style="left:530.0px;top:2555.0px;font-size:37.68px;color:#000;transform:scaleX(0.8642);font-weight:bold;">LCS4</span>
<div style="left:983.7px;top:2532.2px;width:511.3px;height:75.7px;background:#404040;"></div>
<div style="left:983.7px;top:2532.2px;width:508.1px;height:72.5px;background:#FFFFFF;"></div>
<div style="left:986.9px;top:2535.4px;width:504.8px;height:69.2px;background:#808080;"></div>
<div style="left:986.9px;top:2535.4px;width:501.6px;height:66.0px;background:#D8D0C8;"></div>
<span class="t" style="left:1053.0px;top:2549.7px;font-size:39.13px;color:#000;transform:scaleX(0.8939);">C:\Documents and Settin...</span>
<div style="left:2656.0px;top:2532.2px;width:646.4px;height:75.7px;background:#FFFFFF;"></div>
<div style="left:2656.0px;top:2532.2px;width:643.2px;height:72.5px;background:#808080;"></div>
<div style="left:2659.2px;top:2535.4px;width:639.9px;height:69.2px;background:#D8D0C8;"></div>
<span class="t" style="left:3116.0px;top:2554.9px;font-size:38.41px;color:#000;transform:scaleX(0.8874);">10:13 AM</span>
<svg style="left:0;top:0" width="3339" height="2646" viewBox="0 0 3339 2646"><defs>
<linearGradient id="gpg" x1="0.35" y1="0" x2="0.65" y2="1"><stop offset="0.3" stop-color="#fff"/><stop offset="1" stop-color="#10A8F8"/></linearGradient>
<linearGradient id="gpl" x1="0" y1="0" x2="1" y2="1"><stop offset="0.3" stop-color="#fff"/><stop offset="1" stop-color="#90D0F8"/></linearGradient>
<linearGradient id="gwg" x1="0" y1="0" x2="1" y2="1"><stop offset="0.3" stop-color="#fff"/><stop offset="1" stop-color="#C0C0C0"/></linearGradient>
<radialGradient id="ggr" cx="0.5" cy="0.5" r="0.5"><stop offset="0" stop-color="#008000"/><stop offset="0.55" stop-color="#00C000"/><stop offset="0.8" stop-color="#60F060"/><stop offset="1" stop-color="#00D800"/></radialGradient>
<linearGradient id="gch" x1="0" y1="0" x2="1" y2="0"><stop offset="0" stop-color="#B8B8B8"/><stop offset="0.3" stop-color="#E8E8E8"/><stop offset="0.6" stop-color="#F8F8F8"/><stop offset="1" stop-color="#fff"/></linearGradient>
</defs><path d="M53.7 41.4 L59.7 41.4 L91.6 56.0 L91.6 68.1 L60.4 68.1 L60.4 88.9 L53.7 88.9 L53.7 85.9 L41.1 82.2 L41.1 72.9 L44.1 72.9 L47.8 56.0Z" fill="url(#gpl)" stroke="#000" stroke-width="3.2" stroke-linejoin="miter" /><rect x="60.4" y="65.9" width="31.2" height="26.7" fill="#000"/><rect x="69.3" y="91.9" width="6.7" height="3.7" fill="#000"/><rect x="63.4" y="68.9" width="25.2" height="3.4" fill="#A0A0A0"/><rect x="63.4" y="76.3" width="2.8" height="13.4" fill="#FFFFC8"/><rect x="70.0" y="76.3" width="18.6" height="3.0" fill="#FFFFC8"/><rect x="70.0" y="85.9" width="18.6" height="3.7" fill="#FFFFC8"/><path d="M59.9 2380.2 L65.9 2380.2 L98.5 2395.0 L98.5 2407.5 L66.7 2407.5 L66.7 2428.7 L59.9 2428.7 L59.9 2425.6 L47.0 2421.9 L47.0 2412.3 L50.0 2412.3 L53.8 2395.0Z" fill="url(#gpl)" stroke="#000" stroke-width="3.2" stroke-linejoin="miter" /><rect x="66.7" y="2405.2" width="31.8" height="27.3" fill="#000"/><rect x="75.8" y="2431.7" width="6.8" height="3.8" fill="#000"/><rect x="69.7" y="2408.2" width="25.8" height="3.5" fill="#A0A0A0"/><rect x="69.7" y="2415.8" width="2.9" height="13.6" fill="#FFFFC8"/><rect x="76.5" y="2415.8" width="18.9" height="3.0" fill="#FFFFC8"/><rect x="76.5" y="2425.6" width="18.9" height="3.8" fill="#FFFFC8"/><path d="M140.6 128.2 L148.8 128.2 L158.6 131.9 L161.6 139.4 L167.6 152.9 L167.6 164.2 L163.8 164.9 L161.6 173.9 L151.1 173.9 L136.9 165.7 L128.2 163.4 L128.2 159.2 L134.2 140.9 L138.4 133.4Z" fill="url(#gwg)" stroke="#000" stroke-width="3.4" stroke-linejoin="miter" /><path d="M154.1 142.4 L159.3 139.4 L164.6 155.9 L157.8 152.9 L151.8 151.4Z" fill="#909090" /><path d="M393.0 121.0 L399.4 121.0 L431.2 136.2 L431.2 142.7 L420.5 167.0 L412.4 173.5 L405.9 173.5 L380.6 157.3 L380.6 154.0Z" fill="url(#gpg)" stroke="#1878C0" stroke-width="2.6" stroke-linejoin="miter" stroke-dasharray="3.2 3.2"/><circle cx="413.4" cy="153.0" r="18.1" fill="url(#ggr)" stroke="#00A800" stroke-width="2"/><path d="M409.2 145.3 L422.1 153.0 L409.2 160.8Z" fill="#000" /><path d="M652.8 122.0 L662.5 122.0 L686.8 133.4 L686.8 141.5 L679.4 160.9 L686.8 169.0 L686.8 173.9 L680.3 173.9 L673.9 169.0 L667.4 173.9 L638.2 159.3 L638.2 147.9Z" fill="url(#gwg)" stroke="#000" stroke-width="3.4" stroke-linejoin="miter" /><circle cx="662.5" cy="148.6" r="11.3" fill="#fff" stroke="#000" stroke-width="3.2"/><path d="M670.6 157.7 L683.6 171.6" fill="none" stroke="#000" stroke-width="5" /><path d="M672.2 159.3 L682.9 170.3" fill="none" stroke="#C0C0C0" stroke-width="2" /><path d="M934.6 128.3 L945.9 128.3 L950.8 134.7 L955.7 126.6 L963.8 125.0 L968.6 129.9 L968.6 139.6 L963.8 146.1 L968.6 157.4 L954.0 173.6 L944.3 173.6 L920.0 160.7 L920.0 155.8 L928.1 136.4Z" fill="url(#gwg)" stroke="#000" stroke-width="3.4" stroke-linejoin="miter" /><path d="M955.7 125.0 L965.4 125.0 L969.6 129.9 L969.6 139.6 L965.4 142.8 L962.1 133.1 L954.0 133.1Z" fill="#000" /><path d="M926.5 144.5 L944.3 152.6 L958.9 146.1" fill="none" stroke="#000" stroke-width="3" /><path d="M1187.6 126.0 L1203.8 126.0 L1222.6 136.4 L1222.6 149.3 L1211.9 172.6 L1200.5 172.6 L1176.5 160.7 L1176.5 154.2 L1182.7 133.1Z" fill="#fff" stroke="#000" stroke-width="3.4" stroke-linejoin="miter" /><path d="M1186.3 131.5 L1218.7 142.8" fill="none" stroke="#000" stroke-width="2.4" /><path d="M1186.3 134.7 L1218.7 146.1" fill="none" stroke="#A0A0A0" stroke-width="2.0" /><path d="M1184.8 138.3 L1216.7 149.3" fill="none" stroke="#000" stroke-width="2.4" /><path d="M1184.8 141.5 L1216.7 152.6" fill="none" stroke="#A0A0A0" stroke-width="2.0" /><path d="M1183.3 145.1 L1214.8 155.8" fill="none" stroke="#000" stroke-width="2.4" /><path d="M1183.3 148.3 L1214.8 159.0" fill="none" stroke="#A0A0A0" stroke-width="2.0" /><path d="M1181.9 151.9 L1212.8 162.3" fill="none" stroke="#000" stroke-width="2.4" /><path d="M1181.9 155.2 L1212.8 165.5" fill="none" stroke="#A0A0A0" stroke-width="2.0" /><path d="M1180.4 158.7 L1210.9 168.8" fill="none" stroke="#000" stroke-width="2.4" /><path d="M1180.4 162.0 L1210.9 172.0" fill="none" stroke="#A0A0A0" stroke-width="2.0" /><path d="M1453.7 128.2 L1465.0 128.2 L1471.5 134.7 L1478.0 141.2 L1481.2 155.8 L1486.1 162.2 L1486.1 173.6 L1479.6 175.8 L1444.0 175.8 L1438.5 172.0 L1438.5 157.4 L1442.4 152.5 L1445.6 137.9Z" fill="#fff" /><path d="M1450.5 125.0 L1461.8 125.0 L1468.3 131.5 L1474.8 138.0 L1478.0 152.6 L1482.9 159.0 L1482.9 170.4 L1476.4 172.6 L1440.8 172.6 L1435.3 168.8 L1435.3 154.2 L1439.2 149.3 L1442.4 134.7Z" fill="#808080" /><path d="M1448.9 139.6 L1448.9 132.5 L1458.6 131.5" fill="none" stroke="#fff" stroke-width="2.4" /><path d="M1447.3 151.9 L1453.7 151.9" fill="none" stroke="#fff" stroke-width="2.6" /><path d="M1458.6 151.9 L1464.1 151.9" fill="none" stroke="#fff" stroke-width="2.6" /><path d="M1722.4 134.4 L1732.1 129.5 L1738.6 121.7 L1750.0 121.7 L1756.4 127.9 L1762.9 144.1 L1762.9 155.4 L1754.8 160.3 L1748.3 158.7 L1743.5 174.2 L1735.4 174.2 L1714.3 162.6 L1714.3 157.1Z" fill="url(#gwg)" stroke="#000" stroke-width="3.4" stroke-linejoin="miter" /><path d="M1738.6 124.7 L1735.4 142.5 L1743.5 157.1" fill="none" stroke="#000" stroke-width="3" /><path d="M1748.3 136.0 L1756.4 139.2 L1758.1 152.2 L1750.0 150.6Z" fill="#A0A0A0" /><path d="M1737.0 144.1 L1741.9 149.0 L1740.2 160.3 L1735.4 155.4Z" fill="#909090" /><path d="M1985.6 121.4 L1992.1 121.4 L2020.6 136.0 L2020.6 142.5 L2009.9 166.8 L2001.8 174.2 L1995.3 174.2 L1970.0 157.1 L1970.0 153.8Z" fill="url(#gpg)" stroke="#1878C0" stroke-width="2.6" stroke-linejoin="miter" stroke-dasharray="3.2 3.2"/><rect x="1972.6" y="123.7" width="19.4" height="20.4" fill="#00C800"/><rect x="1979.1" y="129.5" width="9.7" height="11.3" fill="#004000"/><path d="M1982.4 135.0 L1990.8 135.0" fill="none" stroke="#fff" stroke-width="2.5" /><rect x="1998.6" y="139.2" width="13.0" height="14.6" fill="#F01010"/><rect x="1992.1" y="153.8" width="13.0" height="14.6" fill="#E8E800"/><rect x="2005.0" y="153.8" width="13.0" height="14.6" fill="#1010E0"/><rect x="1998.6" y="139.2" width="6.5" height="6.5" fill="#F0A0A0"/><rect x="1992.1" y="153.8" width="6.5" height="6.5" fill="#FFFFA0"/><path d="M121.9 300.2 L136.2 300.2 L137.2 304.1 L168.2 304.6 L169.1 307.5 L183.4 307.5 L182.9 316.9 L163.7 314.4 L134.2 313.2 L129.3 358.6 L115.1 358.2 L117.5 344.4Z" fill="url(#gpl)" stroke="#0870A8" stroke-width="3.4" stroke-linejoin="miter" /><path d="M140.9 311.5 L149.0 311.0 L150.2 314.9 L168.6 317.4 L183.9 316.9 L199.4 322.3 L196.2 336.5 L171.1 329.2 L156.4 327.9 L142.8 371.4 L128.8 366.0 L130.6 359.1Z" fill="url(#gpl)" stroke="#0870A8" stroke-width="3.4" stroke-linejoin="miter" /><path d="M163.7 324.7 L168.2 324.7 L169.1 328.2 L198.1 337.0 L212.9 344.4 L216.6 347.6 L216.6 359.9 L198.1 398.0 L194.4 407.8 L182.2 404.1 L138.7 379.5Z" fill="url(#gpg)" stroke="#0870A8" stroke-width="3.4" stroke-linejoin="miter" /><path d="M169.1 341.4 L201.8 356.7 L188.8 388.6 L154.4 372.9Z" fill="#B8C8D0" /><path d="M168.2 349.3 L199.4 363.6 L196.2 369.0 L165.2 355.2Z" fill="#FF3030" /><path d="M161.3 361.1 L189.5 374.6" fill="none" stroke="#8098A8" stroke-width="2.2" /><path d="M159.3 367.2 L187.6 380.8" fill="none" stroke="#8098A8" stroke-width="2.2" /><path d="M157.3 373.4 L185.6 386.9" fill="none" stroke="#8098A8" stroke-width="2.2" /><path d="M155.4 379.5 L183.6 393.0" fill="none" stroke="#8098A8" stroke-width="2.2" /><path d="M147.8 506.1 L152.7 507.3 L216.6 537.6 L216.6 544.2 L187.1 606.9 L180.9 611.8 L171.1 609.3 L117.5 578.6 L120.7 571.2Z" fill="url(#gpg)" stroke="#0870A8" stroke-width="3.4" stroke-linejoin="miter" /><circle cx="184.6" cy="570.0" r="31.5" fill="url(#ggr)" stroke="#00C800" stroke-width="2.6"/><path d="M174.8 552.3 L201.1 570.0 L174.8 587.7Z" fill="#000" /><path d="M146.0 706.0 L155.9 710.6 L154.4 715.8 L209.2 715.8 L209.2 734.7 L215.8 735.7 L215.8 749.0 L209.2 750.0 L209.2 785.8 L196.9 787.8 L186.3 813.4 L146.5 795.2 L142.8 785.4 L115.3 775.0 L123.2 758.8 L134.2 730.6 L140.4 712.1Z" fill="url(#gpl)" stroke="#0870A8" stroke-width="3.4" stroke-linejoin="miter" /><path d="M147.0 785.4 L196.9 788.3 L185.4 812.9 L147.0 795.7Z" fill="#00C8FF" stroke="#0870A8" stroke-width="3" stroke-linejoin="miter" /><path d="M116.5 774.8 L123.2 760.0 L142.8 763.7 L142.8 784.6Z" fill="#80E0FF" stroke="#0870A8" stroke-width="3" stroke-linejoin="miter" /><rect x="154.4" y="716.5" width="54.8" height="69.3" fill="url(#gwg)" stroke="#1068A0" stroke-width="3.4"/><rect x="160.0" y="722.4" width="41.8" height="3.4" fill="#FFD8B0"/><rect x="160.0" y="729.8" width="41.8" height="3.4" fill="#FFD8B0"/><rect x="160.0" y="737.2" width="41.8" height="3.4" fill="#FFD8B0"/><rect x="160.0" y="744.6" width="41.8" height="3.4" fill="#FFD8B0"/><rect x="160.0" y="751.9" width="41.8" height="3.4" fill="#FFD8B0"/><rect x="160.0" y="759.3" width="41.8" height="3.4" fill="#FFD8B0"/><rect x="160.0" y="766.7" width="41.8" height="3.4" fill="#FFD8B0"/><rect x="160.0" y="774.1" width="41.8" height="3.4" fill="#FFD8B0"/><path d="M130.6 752.7 L147.8 766.2" fill="none" stroke="#000" stroke-width="7" /><path d="M161.3 772.3 L176.0 774.8" fill="none" stroke="#000" stroke-width="7" /><path d="M146.5 776.0 L139.2 788.3" fill="none" stroke="#000" stroke-width="7" /><circle cx="129.3" cy="747.8" r="8.1" fill="#10A818"/><circle cx="153.4" cy="768.6" r="12.3" fill="#D0D000"/><circle cx="181.4" cy="774.8" r="8.8" fill="#E82018"/><circle cx="134.7" cy="796.2" r="10.8" fill="#2828A0"/><path d="M149.0 911.9 L154.4 913.6 L216.6 943.1 L215.3 951.0 L212.9 1009.5 L187.1 1009.5 L184.6 1016.9 L172.3 1015.6 L168.6 1009.5 L137.9 1009.5 L137.9 992.3 L117.5 983.7 L134.2 948.0 L140.4 925.9Z" fill="url(#gpl)" stroke="#0870A8" stroke-width="3.4" stroke-linejoin="miter" /><path d="M171.1 1009.5 L187.1 1009.5 L184.6 1016.4 L173.6 1015.9Z" fill="#10A8F8" /><rect x="137.9" y="950.5" width="75.0" height="59.0" fill="url(#gch)" stroke="#1068A0" stroke-width="3.6"/><path d="M140.4 1009.5 C156.4 1008.0 166.2 996.5 174.8 980.5 S195.7 966.2 210.9 965.7" fill="none" stroke="#F0B0F0" stroke-width="4.5"/><path d="M140.4 1004.1 C156.4 1002.6 166.2 991.1 174.8 975.1 S195.7 960.8 210.9 960.3" fill="none" stroke="#00E000" stroke-width="4.5"/><rect x="3155.5" y="75.4" width="19.5" height="7.4" fill="#000"/><rect x="3212.1" y="55.4" width="15.1" height="13.9" fill="none" stroke="#000" stroke-width="3.2"/><rect x="3210.5" y="52.2" width="18.3" height="6.8" fill="#000"/><rect x="3205.0" y="65.0" width="16.1" height="15.5" fill="#D8D0C8" stroke="#000" stroke-width="3.2"/><rect x="3203.4" y="61.7" width="19.3" height="6.7" fill="#000"/><path d="M3266.5 56.5 L3288.0 77.5" fill="none" stroke="#000" stroke-width="5.8" /><path d="M3288.0 56.5 L3266.5 77.5" fill="none" stroke="#000" stroke-width="5.8" /><path d="M65.7 2554.7 L73.8 2547.6 L81.9 2547.6 L88.4 2551.5 L97.5 2551.5 L97.5 2593.0 L88.4 2588.7 L81.9 2592.0 L72.2 2587.1 L65.7 2593.0 L56.0 2593.0 L56.0 2587.1 L65.7 2583.9Z" fill="#000" /><rect x="48.2" y="2556.3" width="3.2" height="4.9" fill="#000"/><rect x="48.2" y="2565.4" width="3.2" height="4.9" fill="#000"/><rect x="48.2" y="2574.5" width="3.2" height="4.9" fill="#000"/><rect x="48.2" y="2583.6" width="3.2" height="4.9" fill="#000"/><rect x="47.9" y="2562.8" width="4.2" height="6.5" fill="#F01010"/><rect x="47.9" y="2575.8" width="4.2" height="6.5" fill="#1010E0"/><rect x="54.4" y="2564.4" width="10.7" height="5.2" fill="#F01010"/><rect x="54.4" y="2576.8" width="10.7" height="5.8" fill="#1010E0"/><path d="M69.6 2556.3 L76.1 2552.1 L76.1 2566.1 L69.6 2570.3Z" fill="#F01010" /><path d="M81.9 2553.1 L89.1 2558.0 L89.1 2570.9 L81.9 2566.1Z" fill="#00C000" /><path d="M69.6 2574.2 L76.1 2570.3 L76.1 2582.3 L69.6 2586.5Z" fill="#1010E0" /><path d="M81.9 2570.9 L89.1 2575.8 L89.1 2587.1 L81.9 2583.2Z" fill="#F0E800" /><rect x="264.5" y="2549.0" width="51.0" height="47.6" fill="#000"/><rect x="264.5" y="2549.0" width="47.8" height="44.4" fill="#18A0E0"/><circle cx="288.0" cy="2573.0" r="22.0" fill="#F0F0D0"/><rect x="278.0" y="2565.0" width="22.0" height="25.0" fill="#fff" stroke="#000" stroke-width="3.2"/><path d="M283.0 2568.0 L309.0 2545.0" fill="none" stroke="#E8A020" stroke-width="8" /><path d="M305.0 2548.0 L311.0 2543.0" fill="none" stroke="#E04040" stroke-width="8" /><path d="M342.0 2556.0 L347.0 2548.0 L366.0 2548.0 L371.0 2556.0 L384.0 2556.0 L384.0 2590.0 L342.0 2590.0Z" fill="#000" /><path d="M340.0 2554.0 L345.0 2546.0 L364.0 2546.0 L369.0 2554.0 L382.0 2554.0 L382.0 2588.0 L340.0 2588.0Z" fill="#F8E090" stroke="#A0A010" stroke-width="2.6" stroke-linejoin="miter" /><path d="M362.0 2580.0 L384.0 2596.0" fill="none" stroke="#000" stroke-width="9" /><path d="M362.0 2580.0 L382.0 2594.0" fill="none" stroke="#1060E0" stroke-width="5.5" /><circle cx="357.0" cy="2568.0" r="10.5" fill="#60F0F0" stroke="#606060" stroke-width="3"/><path d="M490.0 2546.0 L505.0 2548.0 L524.0 2562.0 L474.0 2582.0 L478.0 2566.0Z" fill="#88B8F0" stroke="#6090E0" stroke-width="2" stroke-linejoin="miter" /><circle cx="494.0" cy="2557.0" r="7.0" fill="#E8F0FF"/><path d="M474.0 2582.0 L524.0 2562.0 L526.0 2570.0 L474.0 2592.0Z" fill="#70A8E8" /><path d="M473.0 2590.0 L522.0 2566.0 L523.0 2573.0 L473.0 2600.0Z" fill="#F05050" /><path d="M480.0 2600.0 L524.0 2571.0 L525.0 2578.0 L492.0 2600.0Z" fill="#00C000" /><path d="M494.0 2600.0 L526.0 2576.0 L526.0 2583.0 L506.0 2600.0Z" fill="#E8D030" /><path d="M1000.0 2558.0 L1006.0 2549.0 L1022.0 2549.0 L1028.0 2556.0 L1046.0 2558.0 L1046.0 2590.0 L1004.0 2590.0Z" fill="#000" /><path d="M996.0 2556.0 L1002.0 2547.0 L1018.0 2547.0 L1024.0 2553.0 L1042.0 2555.0 L1036.0 2568.0 L1036.0 2586.0 L1000.0 2586.0 L996.0 2572.0Z" fill="#FFFFA0" stroke="#A0A010" stroke-width="2.6" stroke-linejoin="miter" /><path d="M1000.0 2586.0 L1003.0 2570.0 L1040.0 2570.0 L1036.0 2586.0Z" fill="#F8D090" /><path d="M2669.0 2562.0 L2680.0 2562.0 L2692.0 2545.0 L2696.0 2545.0 L2696.0 2596.0 L2692.0 2596.0 L2680.0 2580.0 L2669.0 2580.0Z" fill="#F0F060" stroke="#000" stroke-width="3" stroke-linejoin="miter" /><path d="M2690.0 2548.0 L2697.0 2548.0 L2697.0 2594.0 L2690.0 2594.0Z" fill="#000" /><rect x="2697.0" y="2550.0" width="5.0" height="42.0" fill="#fff"/><path d="M2708.0 2556.0 L2716.0 2549.0" fill="none" stroke="#A0A0A0" stroke-width="2.4" /><path d="M2708.0 2571.0 L2719.0 2571.0" fill="none" stroke="#A0A0A0" stroke-width="2.4" /><path d="M2708.0 2585.0 L2716.0 2592.0" fill="none" stroke="#A0A0A0" stroke-width="2.4" /><rect x="2732.0" y="2544.0" width="26.0" height="22.0" fill="#C0C0C0" stroke="#404040" stroke-width="3"/><rect x="2736.0" y="2547.0" width="18.0" height="15.0" fill="#008080"/><rect x="2730.0" y="2568.0" width="30.0" height="6.0" fill="#E0E0E0" stroke="#404040" stroke-width="2.4"/><path d="M2736.0 2580.0 L2762.0 2580.0" fill="none" stroke="#000" stroke-width="3.4" /><path d="M2745.0 2586.0 L2762.0 2586.0" fill="none" stroke="#000" stroke-width="3" /><path d="M2758.0 2576.0 L2776.0 2596.0" fill="none" stroke="#F01010" stroke-width="6.5" /><path d="M2776.0 2576.0 L2758.0 2596.0" fill="none" stroke="#F01010" stroke-width="6.5" /><rect x="2784.0" y="2543.0" width="51.0" height="54.0" fill="#000"/><rect x="2787.0" y="2546.0" width="45.0" height="45.0" fill="#0000E8"/><path d="M2794.0 2552.0 L2794.0 2588.0 L2826.0 2570.0Z" fill="#fff" /><path d="M2792.0 2553.0 L2792.0 2587.0" fill="none" stroke="#40C0FF" stroke-width="3" /><rect x="2841.0" y="2543.0" width="52.0" height="54.0" fill="#C0C0C0"/><path d="M2862.0 2546.0 L2872.0 2546.0 L2884.0 2566.0 L2878.0 2588.0 L2856.0 2590.0 L2846.0 2574.0Z" fill="#fff" stroke="#000" stroke-width="3.2" stroke-linejoin="miter" /><path d="M2852.0 2570.0 L2868.0 2556.0 L2876.0 2570.0" fill="none" stroke="#000" stroke-width="3" /><path d="M2872.0 2578.0 L2880.0 2572.0 L2888.0 2580.0 L2880.0 2590.0Z" fill="#fff" stroke="#C08020" stroke-width="2.4" stroke-linejoin="miter" /><circle cx="2879.0" cy="2581.0" r="2.5" fill="#E01080"/><path d="M2900.0 2548.0 L2944.0 2548.0 L2950.0 2570.0 L2906.0 2572.0Z" fill="#fff" stroke="#000" stroke-width="3" stroke-linejoin="miter" /><rect x="2906.0" y="2550.0" width="16.0" height="9.0" fill="#F010F0"/><rect x="2922.0" y="2550.0" width="18.0" height="9.0" fill="#00D000"/><rect x="2910.0" y="2559.0" width="16.0" height="9.0" fill="#E8E800"/><rect x="2926.0" y="2559.0" width="18.0" height="9.0" fill="#0010D0"/><path d="M2918.0 2572.0 L2936.0 2572.0 L2936.0 2584.0 L2946.0 2588.0 L2946.0 2596.0 L2908.0 2596.0 L2908.0 2588.0 L2918.0 2584.0Z" fill="#D8D8D8" stroke="#000" stroke-width="3" stroke-linejoin="miter" /><path d="M2960.0 2553.0 L2973.0 2544.0 L2973.0 2550.0 L3005.0 2550.0 L3005.0 2557.0 L2973.0 2557.0 L2973.0 2562.0Z" fill="#00E000" /><path d="M2975.0 2548.0 L3005.0 2548.0" fill="none" stroke="#000" stroke-width="2" /><path d="M3006.0 2588.0 L2993.0 2579.0 L2993.0 2585.0 L2960.0 2585.0 L2960.0 2592.0 L2993.0 2592.0 L2993.0 2597.0Z" fill="#F01010" /><path d="M2960.0 2584.0 L2992.0 2584.0" fill="none" stroke="#000" stroke-width="2" /><path d="M2972.0 2566.0 L2984.0 2560.0 L2996.0 2566.0 L2996.0 2582.0 L2972.0 2582.0Z" fill="#1020C0" /><circle cx="2978.0" cy="2566.0" r="3.0" fill="#60E0FF"/><circle cx="3040.0" cy="2574.0" r="22.0" fill="#C8C8C8" stroke="#909090" stroke-width="2"/><path d="M3018.0 2546.0 L3026.0 2552.0 L3030.0 2576.0 L3022.0 2570.0Z" fill="#000" /><path d="M3028.0 2552.0 L3040.0 2556.0 L3036.0 2574.0 L3028.0 2570.0Z" fill="#F0F060" /><circle cx="3025.0" cy="2568.0" r="3.0" fill="#00C000"/><rect x="3038.0" y="2576.0" width="26.0" height="20.0" fill="#FFFF90" stroke="#C0A000" stroke-width="2.4"/></svg>
</body></html>
